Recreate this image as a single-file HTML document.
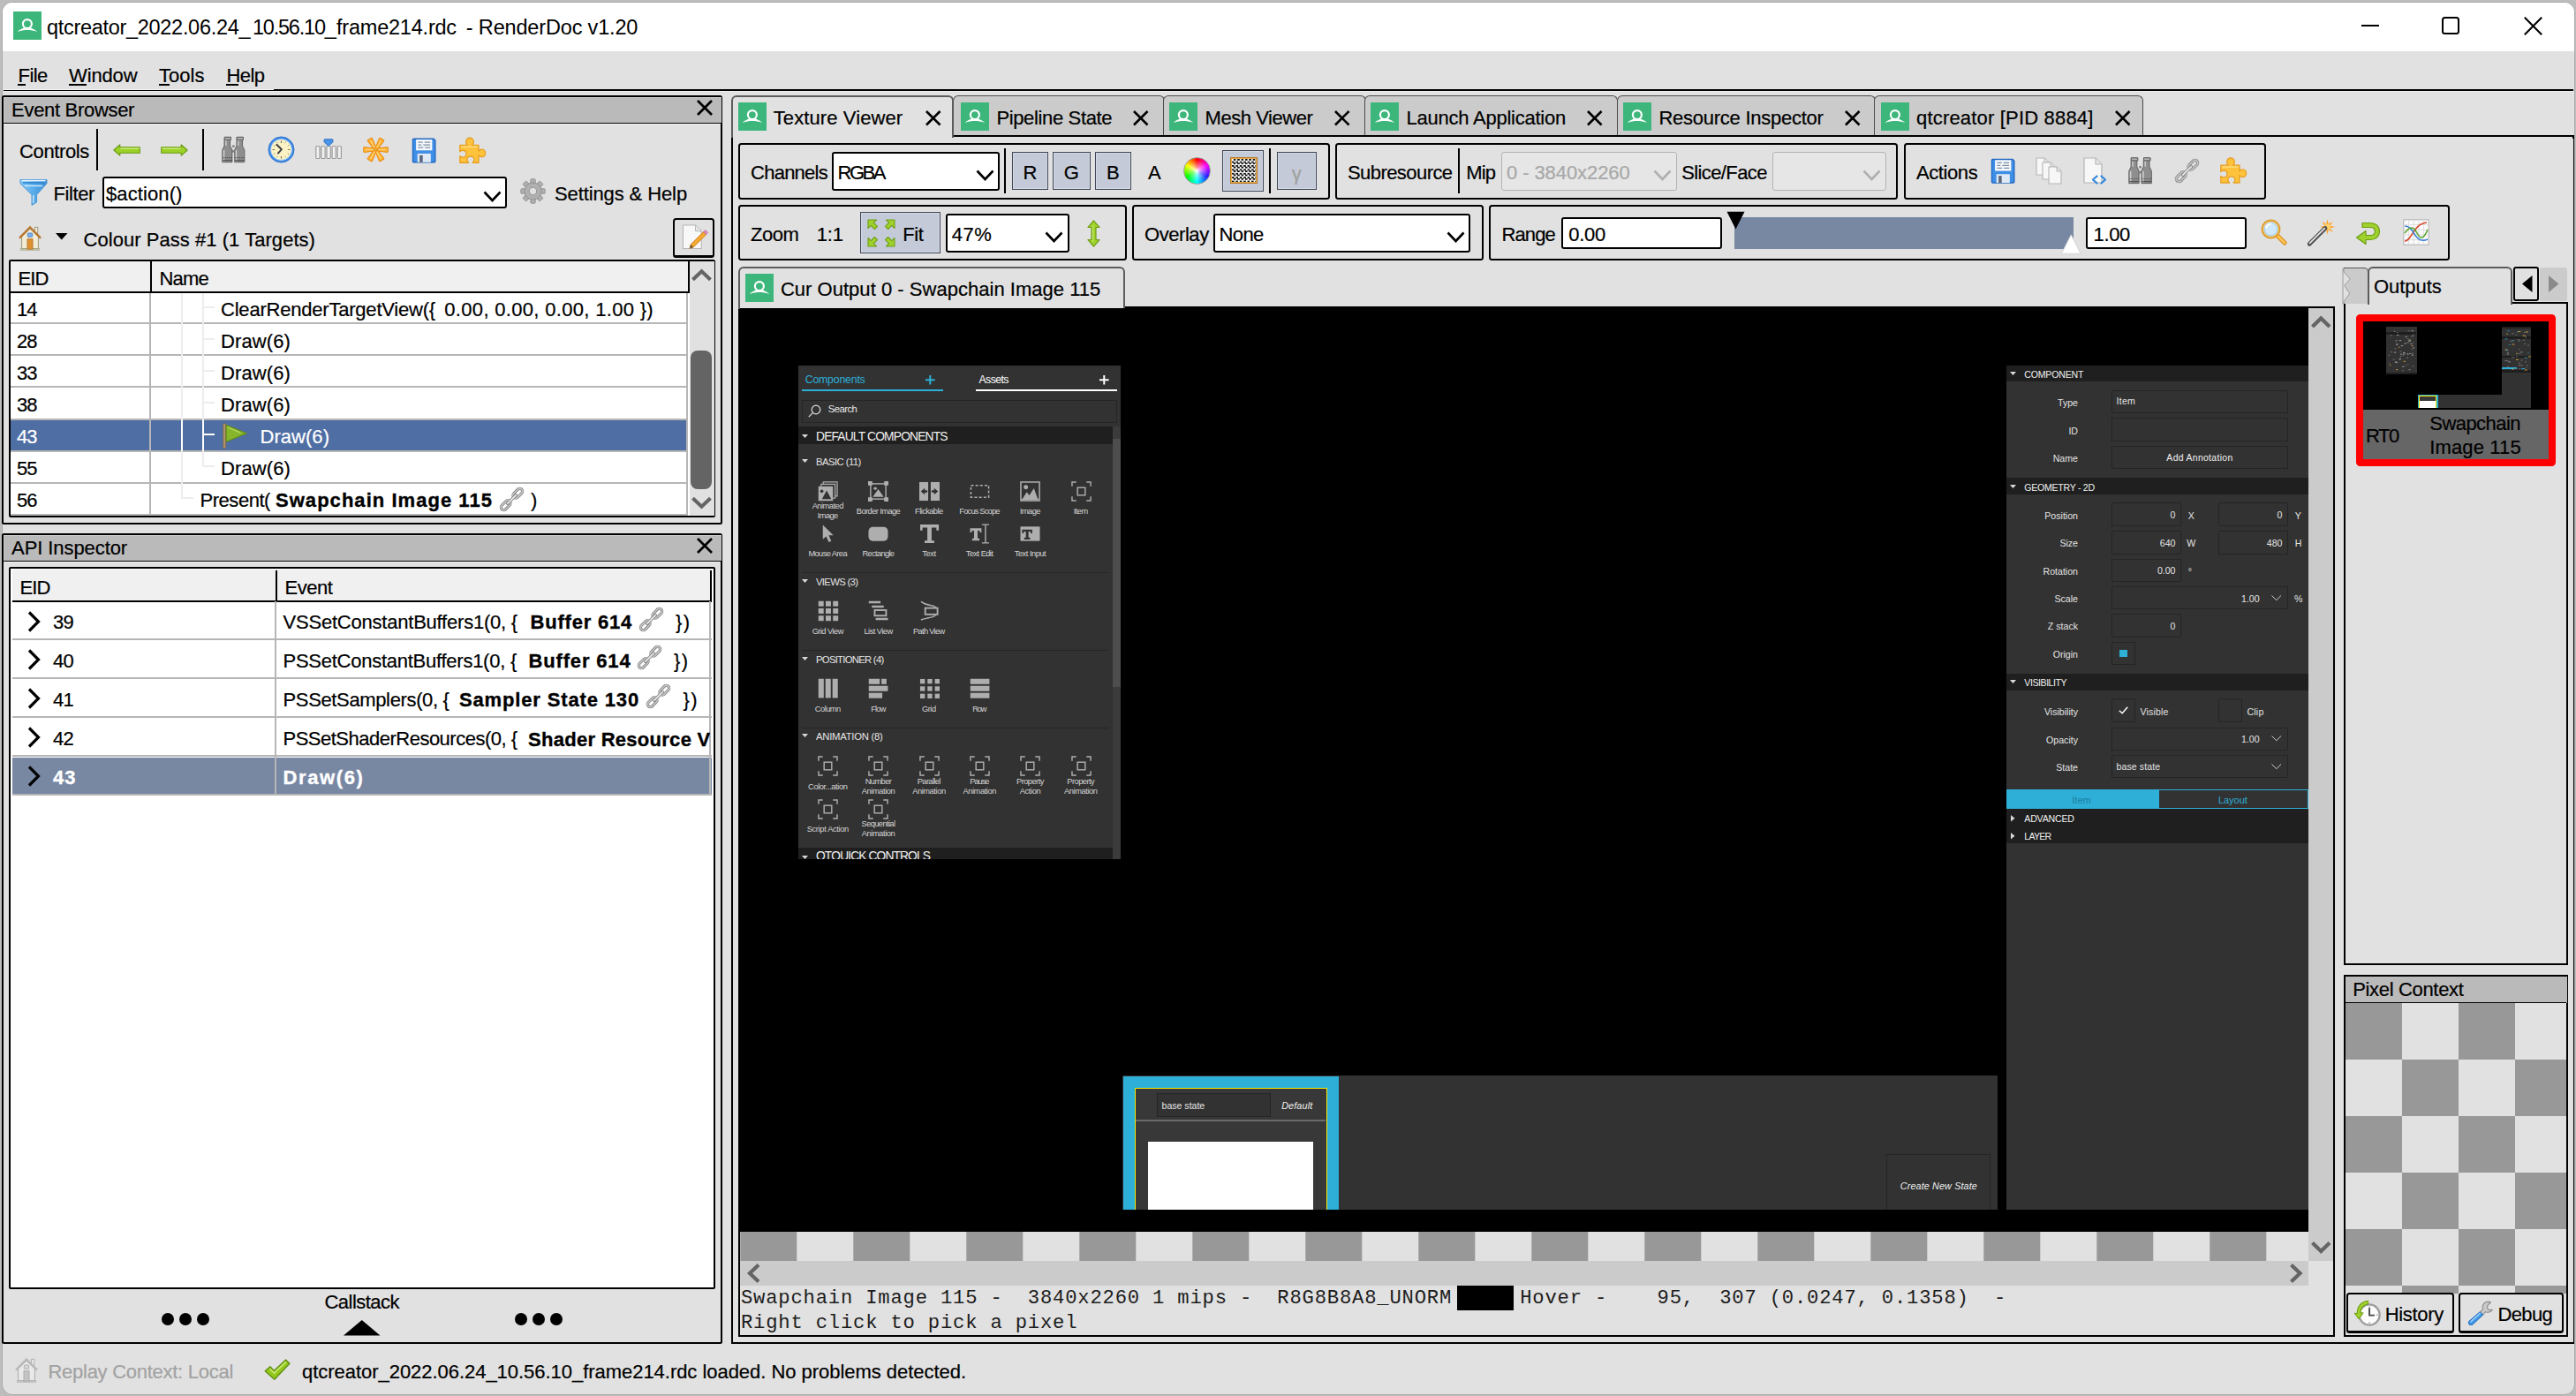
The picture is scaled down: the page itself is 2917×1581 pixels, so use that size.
<!DOCTYPE html>
<html lang="en"><head><meta charset="utf-8"><title>RenderDoc</title><style>
html,body{margin:0;padding:0;}
body{width:2917px;height:1581px;overflow:hidden;background:#bdbdbd;position:relative;font-family:"Liberation Sans",sans-serif;}
.a{position:absolute;box-sizing:border-box;}
.t{position:absolute;white-space:pre;line-height:1;font-family:"Liberation Sans",sans-serif;}
.bm{display:inline-block;width:0;height:0;vertical-align:baseline;}
svg{overflow:visible;}
</style></head><body>
<div class="a" style="left:1.5px;top:1.5px;width:2914px;height:1578px;background:#e1e1e1;border-radius:12px;overflow:hidden;border:1px solid #aaa;"></div>
<div class="a" style="left:2.5px;top:2.5px;width:2912px;height:55.5px;background:#fff;border-radius:11px 11px 0 0;"></div>
<svg class="a" style="left:15px;top:13px;" width="32" height="32" viewBox="0 0 32 32"><rect width="32" height="32" fill="#3db67b"/><circle cx="15.9" cy="14.1" r="5" fill="none" stroke="#fff" stroke-width="2.200"/><path d="M4.400 23C8.500 19.500 12.500 17.900 15.900 17.900S23.300 19.500 27.400 23C23 21.600 19.500 21.100 15.900 21.100S8.800 21.600 4.400 23z" fill="#fff"/></svg>
<div class="t" style="font-size:23.5px;color:#000;-webkit-text-stroke:.22px;letter-spacing:-0.300px;left:53.00px;top:20.10px;-webkit-text-stroke:0;">qtcreator_2022.06.24_</div>
<div class="t" style="font-size:23.5px;color:#000;-webkit-text-stroke:.22px;letter-spacing:-1.194px;left:285.90px;top:20.10px;-webkit-text-stroke:0;">10.56.10_</div>
<div class="t" style="font-size:23.5px;color:#000;-webkit-text-stroke:.22px;letter-spacing:-0.213px;left:381.00px;top:20.10px;-webkit-text-stroke:0;">frame214.rdc</div>
<div class="t" style="font-size:23.5px;color:#000;-webkit-text-stroke:.22px;letter-spacing:-0.162px;left:527.80px;top:20.10px;-webkit-text-stroke:0;">- RenderDoc v1.20</div>
<div class="a" style="left:2674px;top:27.8px;width:20.2px;height:2.2px;background:#000;"></div>
<div class="a" style="left:2765px;top:19.1px;width:19.9px;height:19.8px;border:2.200px solid #000;border-radius:3.5px;"></div>
<svg class="a" style="left:2857.7px;top:18.8px;" width="21" height="21" viewBox="0 0 21 21"><path d="M.8 .8l19.400 19.400M20.200 .8L.8 20.200" stroke="#000" stroke-width="2.100" fill="none"/></svg>
<div class="t" style="font-size:22px;color:#000;-webkit-text-stroke:.22px;letter-spacing:-0.638px;left:20.60px;top:75.10px;">File</div>
<div class="t" style="font-size:22px;color:#000;-webkit-text-stroke:.22px;letter-spacing:-0.125px;left:78.00px;top:75.10px;">Window</div>
<div class="t" style="font-size:22px;color:#000;-webkit-text-stroke:.22px;letter-spacing:0.028px;left:180.00px;top:75.10px;">Tools</div>
<div class="t" style="font-size:22px;color:#000;-webkit-text-stroke:.22px;letter-spacing:-0.562px;left:256.50px;top:75.10px;">Help</div>
<div class="a" style="left:20.1px;top:95.1px;width:9.4px;height:1.7px;background:#000;"></div>
<div class="a" style="left:77.5px;top:95.1px;width:20px;height:1.7px;background:#000;"></div>
<div class="a" style="left:179.5px;top:95.1px;width:12px;height:1.7px;background:#000;"></div>
<div class="a" style="left:256px;top:95.1px;width:14px;height:1.7px;background:#000;"></div>
<div class="a" style="left:4px;top:101.9px;width:306px;height:1.1px;background:#000;"></div>
<div class="a" style="left:310px;top:101px;width:2604px;height:2px;background:#000;"></div>
<div class="a" style="left:4px;top:101px;width:306px;height:0.9px;background:#f4f4f4;"></div>
<div class="a" style="left:4px;top:103px;width:2910px;height:1px;background:#efefef;"></div>
<svg class="a" style="left:17px;top:1536.5px;" width="26" height="28.5" viewBox="0 0 26 28.5"><rect x="18.600" y="2.300" width="3.200" height="7" fill="#e9e9e9" stroke="#ababab" stroke-width=".9"/><path d="M3.600 13V26.500H22.400V13L13 4.200z" fill="#e9e9e9" stroke="#ababab" stroke-width="1"/><path d="M1 14.600L13 2.300l12 12.300" fill="none" stroke="#b9b9b9" stroke-width="2.300" stroke-linejoin="miter"/><path d="M2.300 26.500h21.400v1.800H2.300z" fill="#c8c8c8" stroke="#ababab" stroke-width=".6"/><rect x="10" y="15.800" width="6" height="11.300" fill="#c4c4c4" stroke="#ababab" stroke-width="1"/><rect x="10.300" y="9" width="5.400" height="4.300" rx=".8" fill="#d6d6d6" stroke="#ababab" stroke-width=".9"/></svg>
<div class="t" style="font-size:22px;color:#a2a2a2;-webkit-text-stroke:.22px;letter-spacing:-0.273px;left:54.50px;top:1543.10px;">Replay Context: Local</div>
<svg class="a" style="left:299px;top:1539.4px;" width="30" height="24" viewBox="0 0 30 24"><path d="M1.200 13.800l5.800-5 4.300 4.600L24.600 1l4.300 4.200L11.800 23.200z" fill="#93c91e" stroke="#5f8d10" stroke-width="1.300" stroke-linejoin="round"/><path d="M6.800 11.300l4.600 4.800L24.800 3.400" stroke="#c9e873" stroke-width="1.500" fill="none"/></svg>
<div class="t" style="font-size:22px;color:#000;-webkit-text-stroke:.22px;letter-spacing:-0.037px;left:342.00px;top:1543.10px;">qtcreator_2022.06.24_10.56.10_frame214.rdc loaded. No problems detected.</div>
<div class="a" style="left:2px;top:108px;width:816px;height:486px;border:2px solid #000;border-radius:2.5px;"></div>
<div class="a" style="left:4px;top:110px;width:813px;height:29px;background:#bababa;box-shadow:inset 1px 1px 0 #cfcfcf;"></div>
<div class="a" style="left:4px;top:138.8px;width:813px;height:1.3px;background:#000;"></div>
<div class="a" style="left:4px;top:140.1px;width:812px;height:1px;background:#f2f2f2;"></div>
<div class="t" style="font-size:22px;color:#000;-webkit-text-stroke:.22px;letter-spacing:-0.312px;left:13.10px;top:114.10px;">Event Browser</div>
<svg class="a" style="left:789px;top:112.8px;" width="18" height="18" viewBox="0 0 18 18"><path d="M1 1l16 16M17 1L1 17" stroke="#000" stroke-width="2.7" fill="none"/></svg>
<div class="t" style="font-size:22px;color:#000;-webkit-text-stroke:.22px;letter-spacing:-0.365px;left:22.00px;top:161.10px;">Controls</div>
<div class="a" style="left:109.3px;top:146px;width:2px;height:47px;background:#000;"></div>
<div class="a" style="left:229.3px;top:146px;width:2px;height:47px;background:#000;"></div>
<svg class="a" style="left:128px;top:162.5px;" width="31" height="14" viewBox="0 0 31 14"><path d="M.800 7L7.800 .800V3.800H30.300V10.200H7.800V13.200Z" fill="#9bd028" stroke="#6a9a12" stroke-width="1.100" stroke-linejoin="round"/><path d="M8.300 5.300h21.300" stroke="#cdec7c" stroke-width="1.300"/></svg>
<svg class="a" style="left:182px;top:162.5px;" width="31" height="14" viewBox="0 0 31 14"><path d="M30.200 7L23.200 .800V3.800H.700V10.200H23.200V13.200Z" fill="#9bd028" stroke="#6a9a12" stroke-width="1.100" stroke-linejoin="round"/><path d="M1.400 5.300h21.300" stroke="#cdec7c" stroke-width="1.300"/></svg>
<svg class="a" style="left:250.5px;top:154px;" width="27" height="31" viewBox="0 0 27.5 30"><g transform="translate(0 0)"><path d="M3.300 .600h7.400v2.900h-.9v7.200l2.300 4.600V29.400H.800V15.300l2.300-4.600V3.500h.2z" fill="#8e8e8e" stroke="#5f5f5f" stroke-width="1" stroke-linejoin="round"/><path d="M3.300 .600h7.400v2.900H3.300z" fill="#b5b5b5" stroke="#5f5f5f" stroke-width="1"/><path d="M2.600 15.500V28.500" stroke="#d0d0d0" stroke-width="1.600"/><path d="M5 4.500v6" stroke="#cfcfcf" stroke-width="1.400"/><path d="M1.300 24.300H12.100" stroke="#4f4f4f" stroke-width="1.100" stroke-dasharray="1.300 1"/><path d="M1.300 27.300H12.100" stroke="#555" stroke-width="1.300"/></g><g transform="translate(14.2 0)"><path d="M3.300 .600h7.400v2.900h-.9v7.200l2.300 4.600V29.400H.800V15.300l2.300-4.600V3.500h.2z" fill="#8e8e8e" stroke="#5f5f5f" stroke-width="1" stroke-linejoin="round"/><path d="M3.300 .600h7.400v2.900H3.300z" fill="#b5b5b5" stroke="#5f5f5f" stroke-width="1"/><path d="M2.600 15.500V28.500" stroke="#d0d0d0" stroke-width="1.600"/><path d="M5 4.500v6" stroke="#cfcfcf" stroke-width="1.400"/><path d="M1.300 24.300H12.100" stroke="#4f4f4f" stroke-width="1.100" stroke-dasharray="1.300 1"/><path d="M1.300 27.300H12.100" stroke="#555" stroke-width="1.300"/></g><rect x="12.300" y="9.800" width="2.600" height="2.400" fill="#7d7d7d"/><rect x="12.300" y="15.600" width="2.600" height="2.600" fill="#7d7d7d"/></svg>
<svg class="a" style="left:303px;top:154px;" width="31" height="31" viewBox="0 0 31 31"><circle cx="15.5" cy="15.5" r="13.300" fill="#fbf3c4" stroke="#3f8ce6" stroke-width="2.700"/><circle cx="15.5" cy="15.5" r="14.500" fill="none" stroke="#2c6fc9" stroke-width=".8"/><circle cx="15.5" cy="15.5" r="11.800" fill="none" stroke="#a9cdf5" stroke-width=".9"/><g stroke="#77745c" stroke-width="1.200"><path d="M15.5 5.500v2.600M15.5 22.900v2.600M5.500 15.500h2.600M22.900 15.500h2.600"/></g><g stroke="#9a977c" stroke-width="1"><path d="M10.500 6.800l.8 1.400M20.500 6.800l-.8 1.400M6.800 10.500l1.400.8M24.200 10.500l-1.400.8M6.800 20.500l1.400-.8M24.200 20.500l-1.400-.8M10.500 24.200l.8-1.400M20.500 24.200l-.8-1.400"/></g><path d="M10.300 9.800l5.600 5.400-4 4.400" fill="none" stroke="#3c3c44" stroke-width="1.900" stroke-linecap="round" stroke-linejoin="round"/></svg>
<svg class="a" style="left:357px;top:157px;" width="30" height="24" viewBox="0 0 30 24"><rect x="0.8" y="8.500" width="4.200" height="14" rx="1" fill="#f1f1f1" stroke="#9c9c9c" stroke-width="1.200"/><rect x="6.8999999999999995" y="8.500" width="4.200" height="14" rx="1" fill="#f1f1f1" stroke="#9c9c9c" stroke-width="1.200"/><rect x="13.0" y="8.500" width="4.200" height="14" rx="1" fill="#f1f1f1" stroke="#9c9c9c" stroke-width="1.200"/><rect x="19.099999999999998" y="8.500" width="4.200" height="14" rx="1" fill="#f1f1f1" stroke="#9c9c9c" stroke-width="1.200"/><rect x="25.2" y="8.500" width="4.200" height="14" rx="1" fill="#f1f1f1" stroke="#9c9c9c" stroke-width="1.200"/><path d="M10.800 .700h8.400c.5 0 .8.300.8.800v2.300l-5 4.700-5-4.700V1.500c0-.5.300-.8.800-.8z" fill="#4a94e8" stroke="#2a6cc0" stroke-width=".9"/></svg>
<svg class="a" style="left:411px;top:155.3px;" width="29" height="29" viewBox="0 0 29 29"><path d="M15.500 13.100L27.600 11.500a.6.6 0 0 1 .7.500v5a.6.6 0 0 1-.7.500L15.500 15.900z" transform="rotate(0 14.5 14.5)" fill="#ffb12f" stroke="#e78d17" stroke-width="1" stroke-linejoin="round"/><path d="M15.500 13.100L27.600 11.500a.6.6 0 0 1 .7.500v5a.6.6 0 0 1-.7.500L15.500 15.900z" transform="rotate(60 14.5 14.5)" fill="#ffb12f" stroke="#e78d17" stroke-width="1" stroke-linejoin="round"/><path d="M15.500 13.100L27.600 11.500a.6.6 0 0 1 .7.500v5a.6.6 0 0 1-.7.500L15.500 15.900z" transform="rotate(120 14.5 14.5)" fill="#ffb12f" stroke="#e78d17" stroke-width="1" stroke-linejoin="round"/><path d="M15.500 13.100L27.600 11.500a.6.6 0 0 1 .7.500v5a.6.6 0 0 1-.7.500L15.500 15.900z" transform="rotate(180 14.5 14.5)" fill="#ffb12f" stroke="#e78d17" stroke-width="1" stroke-linejoin="round"/><path d="M15.500 13.100L27.600 11.500a.6.6 0 0 1 .7.500v5a.6.6 0 0 1-.7.500L15.500 15.900z" transform="rotate(240 14.5 14.5)" fill="#ffb12f" stroke="#e78d17" stroke-width="1" stroke-linejoin="round"/><path d="M15.500 13.100L27.600 11.500a.6.6 0 0 1 .7.500v5a.6.6 0 0 1-.7.500L15.500 15.900z" transform="rotate(300 14.5 14.5)" fill="#ffb12f" stroke="#e78d17" stroke-width="1" stroke-linejoin="round"/><path d="M17 14.500h9.500" transform="rotate(0 14.5 14.5)" stroke="#ffd27a" stroke-width="1.300"/><path d="M17 14.500h9.500" transform="rotate(60 14.5 14.5)" stroke="#ffd27a" stroke-width="1.300"/><path d="M17 14.500h9.500" transform="rotate(120 14.5 14.5)" stroke="#ffd27a" stroke-width="1.300"/><path d="M17 14.500h9.500" transform="rotate(180 14.5 14.5)" stroke="#ffd27a" stroke-width="1.300"/><path d="M17 14.500h9.500" transform="rotate(240 14.5 14.5)" stroke="#ffd27a" stroke-width="1.300"/><path d="M17 14.500h9.500" transform="rotate(300 14.5 14.5)" stroke="#ffd27a" stroke-width="1.300"/></svg>
<svg class="a" style="left:466px;top:155.5px;" width="28.5" height="29" viewBox="0 0 29 29"><path d="M2.5 1h23l1.8 1.8V27a1 1 0 0 1-1 1H2.5a1 1 0 0 1-1-1V2a1 1 0 0 1 1-1z" fill="#3f8fe6" stroke="#2268c4" stroke-width="1.4"/><rect x="5.2" y="1.8" width="18.6" height="12.5" fill="#f6f8fb"/><path d="M7.5 5h5.5M15 5h6.5M7.5 8h4M13.5 8h8M7.5 11h6M15.5 11h6" stroke="#7e8ea3" stroke-width="1.2"/><rect x="6.8" y="18" width="15.4" height="10" fill="#dfe9f5"/><rect x="9.3" y="20" width="3.6" height="8" fill="#5a6678"/></svg>
<svg class="a" style="left:518px;top:154.5px;" width="32" height="30.5" viewBox="0 0 32 30"><path d="M11.5 9.2c-1.2-1-1.9-2.2-1.9-3.7C9.6 2.9 11.6 1 14 1s4.4 1.9 4.4 4.5c0 1.5-.7 2.7-1.9 3.7H24v6.6c1-1.2 2.3-1.9 3.6-1.9 2.3 0 4 1.9 4 4.3s-1.700 4.300-4 4.300c-1.300 0-2.600-.7-3.600-1.900V29h-6.800c1.100-1 1.700-2.200 1.700-3.400 0-2.100-1.700-3.700-4-3.700s-4 1.600-4 3.700c0 1.200.6 2.400 1.700 3.400H2.800v-7.500c1 1 2.100 1.500 3.300 1.500 2.200 0 3.900-1.700 3.900-4s-1.700-4-3.900-4c-1.200 0-2.300.5-3.300 1.500V9.200z" fill="#ffc23d" stroke="#e89f20" stroke-width="1.3" stroke-linejoin="round"/><path d="M4.5 11h18" stroke="#ffe08a" stroke-width="1.3"/></svg>
<svg class="a" style="left:22px;top:201.5px;" width="32" height="31" viewBox="0 0 32 31"><defs><linearGradient id="fg" x1="0" y1="0" x2="1" y2="0"><stop offset="0" stop-color="#8ccbf6"/><stop offset=".45" stop-color="#5aaeea"/><stop offset="1" stop-color="#3c8fd6"/></linearGradient></defs><path d="M1 1.500h30v4.300L19.600 18.500V27l-5.600 3.400V18.500L1 5.800z" fill="url(#fg)" stroke="#4a97d8" stroke-width="1" stroke-linejoin="round"/><path d="M2.500 2.600h27" stroke="#e8f5ff" stroke-width="1.500"/><path d="M3.500 4.900h25" stroke="#2f86d0" stroke-width="1.600"/><path d="M6 8.500h20" stroke="#cfe9fb" stroke-width="1.400"/><path d="M15.700 19v9" stroke="#cfe9fb" stroke-width="1.400"/></svg>
<div class="t" style="font-size:22px;color:#000;-webkit-text-stroke:.22px;letter-spacing:-0.398px;left:60.50px;top:209.10px;">Filter</div>
<div class="a" style="left:116.3px;top:200px;width:457.5px;height:35.6px;background:#fff;border:2px solid #000;border-radius:3px;"></div>
<div class="t" style="font-size:22px;color:#000;-webkit-text-stroke:.22px;letter-spacing:0.101px;left:120.00px;top:209.10px;">$action()</div>
<svg class="a" style="left:547px;top:215.6px;" width="21" height="13" viewBox="0 0 21 13"><path d="M1.500 1.500l9 9.500 9-9.500" fill="none" stroke="#000" stroke-width="2.600" stroke-linecap="butt" stroke-linejoin="miter"/></svg>
<svg class="a" style="left:589px;top:202px;" width="29" height="29" viewBox="0 0 29 29"><rect x="11.8" y=".8" width="5.4" height="7" rx="1" transform="rotate(0 14.5 14.5)" fill="#b0b0b0" stroke="#8e8e8e" stroke-width=".9"/><rect x="11.8" y=".8" width="5.4" height="7" rx="1" transform="rotate(45 14.5 14.5)" fill="#b0b0b0" stroke="#8e8e8e" stroke-width=".9"/><rect x="11.8" y=".8" width="5.4" height="7" rx="1" transform="rotate(90 14.5 14.5)" fill="#b0b0b0" stroke="#8e8e8e" stroke-width=".9"/><rect x="11.8" y=".8" width="5.4" height="7" rx="1" transform="rotate(135 14.5 14.5)" fill="#b0b0b0" stroke="#8e8e8e" stroke-width=".9"/><rect x="11.8" y=".8" width="5.4" height="7" rx="1" transform="rotate(180 14.5 14.5)" fill="#b0b0b0" stroke="#8e8e8e" stroke-width=".9"/><rect x="11.8" y=".8" width="5.4" height="7" rx="1" transform="rotate(225 14.5 14.5)" fill="#b0b0b0" stroke="#8e8e8e" stroke-width=".9"/><rect x="11.8" y=".8" width="5.4" height="7" rx="1" transform="rotate(270 14.5 14.5)" fill="#b0b0b0" stroke="#8e8e8e" stroke-width=".9"/><rect x="11.8" y=".8" width="5.4" height="7" rx="1" transform="rotate(315 14.5 14.5)" fill="#b0b0b0" stroke="#8e8e8e" stroke-width=".9"/><circle cx="14.5" cy="14.5" r="9.6" fill="#b0b0b0" stroke="#8e8e8e" stroke-width=".9"/><circle cx="14.5" cy="14.5" r="8.700" fill="#b0b0b0"/><circle cx="14.5" cy="14.5" r="4.2" fill="#e1e1e1" stroke="#8e8e8e" stroke-width=".9"/></svg>
<div class="t" style="font-size:22px;color:#000;-webkit-text-stroke:.22px;letter-spacing:-0.109px;left:628.00px;top:209.10px;">Settings &amp; Help</div>
<svg class="a" style="left:21px;top:255px;" width="26" height="28.5" viewBox="0 0 26 28.5"><rect x="18.600" y="2.300" width="3.200" height="7" fill="#f1ecd6" stroke="#9b9478" stroke-width=".9"/><path d="M3.600 13V26.500H22.400V13L13 4.200z" fill="#f1ecd6" stroke="#9b9478" stroke-width="1"/><path d="M1 14.600L13 2.300l12 12.300" fill="none" stroke="#b9772e" stroke-width="2.300" stroke-linejoin="miter"/><path d="M2.300 26.500h21.400v1.800H2.300z" fill="#c9cfb0" stroke="#9b9478" stroke-width=".6"/><rect x="10" y="15.800" width="6" height="11.300" fill="#dd9230" stroke="#b9772e" stroke-width="1"/><rect x="10.300" y="9" width="5.400" height="4.300" rx=".8" fill="#7fb0ee" stroke="#4c7fc4" stroke-width=".9"/></svg>
<svg class="a" style="left:62.8px;top:263.7px;" width="13.5" height="7.5" viewBox="0 0 13.5 7.5"><path d="M0 0h13.500L6.750 7.500z" fill="#000"/></svg>
<div class="t" style="font-size:22px;color:#000;-webkit-text-stroke:.22px;letter-spacing:0.047px;left:94.50px;top:261.10px;">Colour Pass #1 (1 Targets)</div>
<div class="a" style="left:762px;top:246.8px;width:46.8px;height:45.6px;background:#e1e1e1;border:2px solid #000;border-radius:3.5px;border-bottom-width:3.600px;"></div>
<svg class="a" style="left:771.5px;top:253.5px;" width="30" height="29" viewBox="0 0 31 30"><path d="M1.500 1h14.500l7 7V28.500H1.500z" fill="#f8f8f8" stroke="#b5b5b5" stroke-width="1.100" stroke-linejoin="round"/><path d="M16 1v7h7" fill="#e6e6e6" stroke="#b5b5b5" stroke-width="1" stroke-linejoin="round"/><path d="M9.300 28.300l1.200-4.600L25.300 8.900l3.200 3.200L13.700 26.900z" fill="#f7a92f" stroke="#c07a18" stroke-width=".9" stroke-linejoin="round"/><path d="M25.300 8.900l1.400-1.400c.5-.5 1.300-.5 1.800 0l1.400 1.400c.5.5.5 1.300 0 1.800l-1.400 1.400z" fill="#e08fc0" stroke="#a85a8a" stroke-width=".7"/><path d="M9.300 28.300l1.200-4.600 3.200 3.200z" fill="#6b5a3a"/></svg>
<div class="a" style="left:10px;top:294px;width:800px;height:292px;background:#fff;border:2px solid #000;border-radius:2px;"></div>
<div class="a" style="left:12px;top:296px;width:768.5px;height:34px;background:#f0f0f0;"></div>
<div class="a" style="left:12px;top:329.5px;width:769px;height:2px;background:#000;"></div>
<div class="a" style="left:169.8px;top:296px;width:2.1px;height:35.5px;background:#000;"></div>
<div class="a" style="left:779px;top:296px;width:2px;height:35.5px;background:#000;"></div>
<div class="t" style="font-size:22px;color:#000;-webkit-text-stroke:.22px;letter-spacing:-0.896px;left:20.50px;top:305.10px;">EID</div>
<div class="t" style="font-size:22px;color:#000;-webkit-text-stroke:.22px;letter-spacing:-0.797px;left:180.50px;top:305.10px;">Name</div>
<div class="a" style="left:781px;top:296.2px;width:28px;height:288px;background:#e1e1e1;"></div>
<svg class="a" style="left:782.7px;top:304.5px;" width="23" height="13" viewBox="0 0 23 13"><path d="M1.500 11.800L11.500 2.200l10 9.600" fill="none" stroke="#646464" stroke-width="4"/></svg>
<div class="a" style="left:782.3px;top:396.5px;width:23.5px;height:157.5px;background:#646464;border-radius:8px;"></div>
<svg class="a" style="left:782.7px;top:563px;" width="23" height="13" viewBox="0 0 23 13"><path d="M1.500 1.200L11.500 10.800l10-9.600" fill="none" stroke="#646464" stroke-width="4"/></svg>
<div class="t" style="font-size:22px;color:#000;-webkit-text-stroke:.22px;letter-spacing:-0.992px;left:19.00px;top:340.10px;">14</div>
<div class="t" style="font-size:22px;color:#000;-webkit-text-stroke:.22px;letter-spacing:-0.211px;left:250.00px;top:340.10px;">ClearRenderTargetView({</div>
<div class="t" style="font-size:22px;color:#000;-webkit-text-stroke:.22px;letter-spacing:-0.992px;left:19.00px;top:376.10px;">28</div>
<div class="t" style="font-size:22px;color:#000;-webkit-text-stroke:.22px;letter-spacing:0.109px;left:250.00px;top:376.10px;">Draw(6)</div>
<div class="t" style="font-size:22px;color:#000;-webkit-text-stroke:.22px;letter-spacing:-0.992px;left:19.00px;top:412.10px;">33</div>
<div class="t" style="font-size:22px;color:#000;-webkit-text-stroke:.22px;letter-spacing:0.109px;left:250.00px;top:412.10px;">Draw(6)</div>
<div class="t" style="font-size:22px;color:#000;-webkit-text-stroke:.22px;letter-spacing:-0.992px;left:19.00px;top:448.10px;">38</div>
<div class="t" style="font-size:22px;color:#000;-webkit-text-stroke:.22px;letter-spacing:0.109px;left:250.00px;top:448.10px;">Draw(6)</div>
<div class="a" style="left:12.3px;top:475.4px;width:767.2px;height:35.7px;background:#4f6ea3;"></div>
<div class="t" style="font-size:22px;color:#fff;-webkit-text-stroke:.22px;letter-spacing:-0.992px;left:19.00px;top:484.10px;">43</div>
<div class="t" style="font-size:22px;color:#fff;-webkit-text-stroke:.22px;letter-spacing:0.038px;left:294.50px;top:484.10px;">Draw(6)</div>
<div class="t" style="font-size:22px;color:#000;-webkit-text-stroke:.22px;letter-spacing:-0.992px;left:19.00px;top:520.10px;">55</div>
<div class="t" style="font-size:22px;color:#000;-webkit-text-stroke:.22px;letter-spacing:0.109px;left:250.00px;top:520.10px;">Draw(6)</div>
<div class="t" style="font-size:22px;color:#000;-webkit-text-stroke:.22px;letter-spacing:-0.992px;left:19.00px;top:556.10px;">56</div>
<div class="t" style="font-size:22px;color:#000;-webkit-text-stroke:.22px;letter-spacing:0.319px;left:503.30px;top:340.10px;">0.00, 0.00, 0.00, 1.00 })</div>
<div class="a" style="left:12.3px;top:365.1px;width:766.7px;height:2px;background:#b6b6b6;"></div>
<div class="a" style="left:12.3px;top:401.1px;width:766.7px;height:2px;background:#b6b6b6;"></div>
<div class="a" style="left:12.3px;top:437.1px;width:766.7px;height:2px;background:#b6b6b6;"></div>
<div class="a" style="left:12.3px;top:473.5px;width:766.7px;height:2px;background:#b6b6b6;"></div>
<div class="a" style="left:12.3px;top:509.7px;width:766.7px;height:2px;background:#b6b6b6;"></div>
<div class="a" style="left:12.3px;top:545.7px;width:766.7px;height:2px;background:#b6b6b6;"></div>
<div class="a" style="left:12.3px;top:581.7px;width:766.7px;height:2px;background:#b6b6b6;"></div>
<div class="a" style="left:169.2px;top:332px;width:2px;height:252px;background:#b6b6b6;"></div>
<div class="a" style="left:777.2px;top:332px;width:2px;height:252px;background:#b6b6b6;"></div>
<div class="a" style="left:205px;top:332px;width:2px;height:232px;background:#ededed;"></div>
<div class="a" style="left:229px;top:332px;width:2px;height:196px;background:#ededed;"></div>
<div class="a" style="left:229px;top:347px;width:14px;height:2px;background:#ededed;"></div>
<div class="a" style="left:229px;top:383px;width:14px;height:2px;background:#ededed;"></div>
<div class="a" style="left:229px;top:419px;width:14px;height:2px;background:#ededed;"></div>
<div class="a" style="left:229px;top:455px;width:14px;height:2px;background:#ededed;"></div>
<div class="a" style="left:229px;top:527px;width:14px;height:2px;background:#ededed;"></div>
<div class="a" style="left:205px;top:563px;width:14px;height:2px;background:#ededed;"></div>
<div class="a" style="left:205px;top:476px;width:2px;height:34.3px;background:#fff;"></div>
<div class="a" style="left:229px;top:476px;width:2px;height:34.3px;background:#fff;"></div>
<div class="a" style="left:229px;top:490.8px;width:14px;height:2px;background:#fff;"></div>
<svg class="a" style="left:252px;top:478.5px;" width="28" height="30" viewBox="0 0 28 30"><rect x=".8" y=".8" width="2.800" height="28" rx=".8" fill="#b39670" stroke="#85673f" stroke-width=".8"/><path d="M4.200 2.300L27.300 11.800 4.200 21.300z" fill="#86b52b" stroke="#638f17" stroke-width="1.100" stroke-linejoin="round"/><path d="M5.500 5l15 6.200" stroke="#b3d765" stroke-width="1.300"/></svg>
<div class="t" style="font-size:22px;color:#000;-webkit-text-stroke:.22px;letter-spacing:-0.457px;left:226.50px;top:556.10px;">Present(</div>
<div class="t" style="font-size:22px;color:#000;font-weight:bold;-webkit-text-stroke:.35px;letter-spacing:1.040px;left:312.00px;top:556.10px;">Swapchain Image 115</div>
<svg class="a" style="left:565px;top:551px;" width="29" height="29" viewBox="0 0 29 29"><g transform="translate(21.300 7.700) rotate(45)"><rect x="-3.100" y="-6.300" width="6.200" height="12.600" rx="3.100" fill="none" stroke="#858585" stroke-width="3.200"/><rect x="-3.100" y="-6.300" width="6.200" height="12.600" rx="3.100" fill="none" stroke="#c6c6c6" stroke-width="1.500"/></g><g transform="translate(7.700 21.300) rotate(45)"><rect x="-3.100" y="-6.300" width="6.200" height="12.600" rx="3.100" fill="none" stroke="#858585" stroke-width="3.200"/><rect x="-3.100" y="-6.300" width="6.200" height="12.600" rx="3.100" fill="none" stroke="#c6c6c6" stroke-width="1.500"/></g><path d="M9.800 19.200l9.400-9.400" stroke="#858585" stroke-width="3.600" stroke-linecap="round"/><path d="M9.800 19.200l9.400-9.400" stroke="#ececec" stroke-width="1.700" stroke-linecap="round"/></svg>
<div class="t" style="font-size:22px;color:#000;-webkit-text-stroke:.22px;letter-spacing:-0.328px;left:601.00px;top:556.10px;">)</div>
<div class="a" style="left:2px;top:604.2px;width:816px;height:917.8px;border:2px solid #000;border-radius:2.5px;"></div>
<div class="a" style="left:4px;top:606.2px;width:813px;height:29px;background:#bababa;box-shadow:inset 1px 1px 0 #cfcfcf;"></div>
<div class="a" style="left:4px;top:635px;width:813px;height:1.3px;background:#000;"></div>
<div class="a" style="left:4px;top:636.3px;width:812px;height:1px;background:#f2f2f2;"></div>
<div class="t" style="font-size:22px;color:#000;-webkit-text-stroke:.22px;letter-spacing:-0.083px;left:13.10px;top:610.10px;">API Inspector</div>
<svg class="a" style="left:789px;top:609px;" width="18" height="18" viewBox="0 0 18 18"><path d="M1 1l16 16M17 1L1 17" stroke="#000" stroke-width="2.7" fill="none"/></svg>
<div class="a" style="left:10px;top:642.2px;width:800px;height:817.8px;background:#fff;border:2px solid #000;border-radius:2px;"></div>
<div class="a" style="left:13.5px;top:644.5px;width:792.5px;height:35.5px;background:#f0f0f0;"></div>
<div class="a" style="left:13.5px;top:680px;width:792.5px;height:2px;background:#000;"></div>
<div class="a" style="left:311.6px;top:645.5px;width:2.1px;height:36.5px;background:#000;"></div>
<div class="a" style="left:804px;top:645.5px;width:2px;height:36.5px;background:#000;"></div>
<div class="t" style="font-size:22px;color:#000;-webkit-text-stroke:.22px;letter-spacing:-0.896px;left:22.50px;top:655.10px;">EID</div>
<div class="t" style="font-size:22px;color:#000;-webkit-text-stroke:.22px;letter-spacing:-0.453px;left:322.50px;top:655.10px;">Event</div>
<div class="a" style="left:13.5px;top:857.5px;width:792px;height:42.5px;background:#7888a3;"></div>
<div class="a" style="left:13.5px;top:722.8px;width:792.5px;height:2px;background:#b6b6b6;"></div>
<div class="a" style="left:13.5px;top:766.7px;width:792.5px;height:2px;background:#b6b6b6;"></div>
<div class="a" style="left:13.5px;top:810.8px;width:792.5px;height:2px;background:#b6b6b6;"></div>
<div class="a" style="left:13.5px;top:855.1px;width:792.5px;height:2px;background:#b6b6b6;"></div>
<div class="a" style="left:13.5px;top:899.3px;width:792.5px;height:2px;background:#b6b6b6;"></div>
<div class="a" style="left:311.2px;top:681.4px;width:2px;height:218.6px;background:#b6b6b6;"></div>
<div class="a" style="left:803px;top:681.4px;width:2px;height:218.6px;background:#b6b6b6;"></div>
<svg class="a" style="left:30.5px;top:691.75px;" width="15" height="24" viewBox="0 0 15 24"><path d="M2 1.500L12.500 12 2 22.500" fill="none" stroke="#000" stroke-width="3.2" stroke-linejoin="miter"/></svg>
<div class="t" style="font-size:22px;color:#000;-webkit-text-stroke:.22px;letter-spacing:-0.742px;left:60.00px;top:694.10px;">39</div>
<div class="t" style="font-size:22px;color:#000;-webkit-text-stroke:.22px;letter-spacing:-0.215px;left:320.50px;top:694.10px;">VSSetConstantBuffers1(0, {</div>
<div class="t" style="font-size:22px;color:#000;font-weight:bold;-webkit-text-stroke:.35px;letter-spacing:0.791px;left:600.50px;top:694.10px;">Buffer 614</div>
<svg class="a" style="left:723px;top:686.55px;" width="29" height="29" viewBox="0 0 29 29"><g transform="translate(21.300 7.700) rotate(45)"><rect x="-3.100" y="-6.300" width="6.200" height="12.600" rx="3.100" fill="none" stroke="#858585" stroke-width="3.200"/><rect x="-3.100" y="-6.300" width="6.200" height="12.600" rx="3.100" fill="none" stroke="#c6c6c6" stroke-width="1.500"/></g><g transform="translate(7.700 21.300) rotate(45)"><rect x="-3.100" y="-6.300" width="6.200" height="12.600" rx="3.100" fill="none" stroke="#858585" stroke-width="3.200"/><rect x="-3.100" y="-6.300" width="6.200" height="12.600" rx="3.100" fill="none" stroke="#c6c6c6" stroke-width="1.500"/></g><path d="M9.800 19.200l9.400-9.400" stroke="#858585" stroke-width="3.600" stroke-linecap="round"/><path d="M9.800 19.200l9.400-9.400" stroke="#ececec" stroke-width="1.700" stroke-linecap="round"/></svg>
<div class="t" style="font-size:22px;color:#000;-webkit-text-stroke:.22px;letter-spacing:1.406px;left:765.00px;top:694.10px;">})</div>
<svg class="a" style="left:30.5px;top:734.85px;" width="15" height="24" viewBox="0 0 15 24"><path d="M2 1.500L12.500 12 2 22.500" fill="none" stroke="#000" stroke-width="3.2" stroke-linejoin="miter"/></svg>
<div class="t" style="font-size:22px;color:#000;-webkit-text-stroke:.22px;letter-spacing:-0.742px;left:60.00px;top:738.10px;">40</div>
<div class="t" style="font-size:22px;color:#000;-webkit-text-stroke:.22px;letter-spacing:-0.254px;left:320.50px;top:738.10px;">PSSetConstantBuffers1(0, {</div>
<div class="t" style="font-size:22px;color:#000;font-weight:bold;-webkit-text-stroke:.35px;letter-spacing:0.841px;left:598.50px;top:738.10px;">Buffer 614</div>
<svg class="a" style="left:721px;top:729.65px;" width="29" height="29" viewBox="0 0 29 29"><g transform="translate(21.300 7.700) rotate(45)"><rect x="-3.100" y="-6.300" width="6.200" height="12.600" rx="3.100" fill="none" stroke="#858585" stroke-width="3.200"/><rect x="-3.100" y="-6.300" width="6.200" height="12.600" rx="3.100" fill="none" stroke="#c6c6c6" stroke-width="1.500"/></g><g transform="translate(7.700 21.300) rotate(45)"><rect x="-3.100" y="-6.300" width="6.200" height="12.600" rx="3.100" fill="none" stroke="#858585" stroke-width="3.200"/><rect x="-3.100" y="-6.300" width="6.200" height="12.600" rx="3.100" fill="none" stroke="#c6c6c6" stroke-width="1.500"/></g><path d="M9.800 19.200l9.400-9.400" stroke="#858585" stroke-width="3.600" stroke-linecap="round"/><path d="M9.800 19.200l9.400-9.400" stroke="#ececec" stroke-width="1.700" stroke-linecap="round"/></svg>
<div class="t" style="font-size:22px;color:#000;-webkit-text-stroke:.22px;letter-spacing:1.406px;left:763.00px;top:738.10px;">})</div>
<svg class="a" style="left:30.5px;top:778.85px;" width="15" height="24" viewBox="0 0 15 24"><path d="M2 1.500L12.500 12 2 22.500" fill="none" stroke="#000" stroke-width="3.2" stroke-linejoin="miter"/></svg>
<div class="t" style="font-size:22px;color:#000;-webkit-text-stroke:.22px;letter-spacing:-0.742px;left:60.00px;top:782.10px;">41</div>
<div class="t" style="font-size:22px;color:#000;-webkit-text-stroke:.22px;letter-spacing:-0.358px;left:320.50px;top:782.10px;">PSSetSamplers(0, {</div>
<div class="t" style="font-size:22px;color:#000;font-weight:bold;-webkit-text-stroke:.35px;letter-spacing:0.850px;left:520.00px;top:782.10px;">Sampler State 130</div>
<svg class="a" style="left:731px;top:773.65px;" width="29" height="29" viewBox="0 0 29 29"><g transform="translate(21.300 7.700) rotate(45)"><rect x="-3.100" y="-6.300" width="6.200" height="12.600" rx="3.100" fill="none" stroke="#858585" stroke-width="3.200"/><rect x="-3.100" y="-6.300" width="6.200" height="12.600" rx="3.100" fill="none" stroke="#c6c6c6" stroke-width="1.500"/></g><g transform="translate(7.700 21.300) rotate(45)"><rect x="-3.100" y="-6.300" width="6.200" height="12.600" rx="3.100" fill="none" stroke="#858585" stroke-width="3.200"/><rect x="-3.100" y="-6.300" width="6.200" height="12.600" rx="3.100" fill="none" stroke="#c6c6c6" stroke-width="1.500"/></g><path d="M9.800 19.200l9.400-9.400" stroke="#858585" stroke-width="3.600" stroke-linecap="round"/><path d="M9.800 19.200l9.400-9.400" stroke="#ececec" stroke-width="1.700" stroke-linecap="round"/></svg>
<div class="t" style="font-size:22px;color:#000;-webkit-text-stroke:.22px;letter-spacing:1.406px;left:773.50px;top:782.10px;">})</div>
<svg class="a" style="left:30.5px;top:823.05px;" width="15" height="24" viewBox="0 0 15 24"><path d="M2 1.500L12.500 12 2 22.500" fill="none" stroke="#000" stroke-width="3.2" stroke-linejoin="miter"/></svg>
<div class="t" style="font-size:22px;color:#000;-webkit-text-stroke:.22px;letter-spacing:-0.742px;left:60.00px;top:826.10px;">42</div>
<div class="t" style="font-size:22px;color:#000;-webkit-text-stroke:.22px;letter-spacing:-0.504px;left:320.50px;top:826.10px;">PSSetShaderResources(0, {</div>
<div class="a" style="left:596px;top:812.7px;width:208.29999999999995px;height:42px;overflow:hidden;">
<div class="t" style="font-size:22px;color:#000;font-weight:bold;-webkit-text-stroke:.35px;letter-spacing:0.279px;left:2.00px;top:14.10px;">Shader Resource V</div>
</div>
<svg class="a" style="left:30.5px;top:867.3px;" width="15" height="24" viewBox="0 0 15 24"><path d="M2 1.500L12.500 12 2 22.500" fill="none" stroke="#000" stroke-width="3.2" stroke-linejoin="miter"/></svg>
<div class="t" style="font-size:22px;color:#fff;font-weight:bold;-webkit-text-stroke:.35px;letter-spacing:1.008px;left:60.00px;top:870.10px;">43</div>
<div class="t" style="font-size:22px;color:#fff;font-weight:bold;-webkit-text-stroke:.35px;letter-spacing:1.616px;left:320.50px;top:870.10px;">Draw(6)</div>
<div class="t" style="font-size:22px;color:#000;-webkit-text-stroke:.22px;letter-spacing:-0.528px;left:367.50px;top:1464.10px;">Callstack</div>
<div class="a" style="left:183px;top:1487px;width:13.6px;height:13.6px;background:#000;border-radius:7px;"></div>
<div class="a" style="left:203.2px;top:1487px;width:13.6px;height:13.6px;background:#000;border-radius:7px;"></div>
<div class="a" style="left:223.4px;top:1487px;width:13.6px;height:13.6px;background:#000;border-radius:7px;"></div>
<div class="a" style="left:583px;top:1487px;width:13.6px;height:13.6px;background:#000;border-radius:7px;"></div>
<div class="a" style="left:603.2px;top:1487px;width:13.6px;height:13.6px;background:#000;border-radius:7px;"></div>
<div class="a" style="left:623.4px;top:1487px;width:13.6px;height:13.6px;background:#000;border-radius:7px;"></div>
<svg class="a" style="left:389px;top:1495px;" width="41.5" height="17.6" viewBox="0 0 41.5 17.6"><path d="M0 17.600L20.750 0 41.500 17.600z" fill="#000"/></svg>
<div class="a" style="left:829px;top:153px;width:2086px;height:2px;background:#000;"></div>
<div class="a" style="left:828px;top:153px;width:2px;height:1369px;background:#000;"></div>
<div class="a" style="left:828px;top:1520px;width:2087px;height:2px;background:#000;"></div>
<div class="a" style="left:2913px;top:153px;width:2px;height:4px;background:#000;"></div>
<div class="a" style="left:2914px;top:153px;width:1px;height:1369px;background:#000;"></div>
<div class="a" style="left:1079px;top:108.3px;width:239.7px;height:44.7px;background:#cbcbcb;border:1.500px solid #4a4a4a;border-radius:6px 6px 0 0;border-bottom:none;"></div>
<svg class="a" style="left:1088px;top:116px;" width="32" height="32" viewBox="0 0 32 32"><rect width="32" height="32" fill="#3db67b"/><circle cx="15.9" cy="14.1" r="5" fill="none" stroke="#fff" stroke-width="2.200"/><path d="M4.400 23C8.500 19.500 12.500 17.900 15.900 17.900S23.300 19.500 27.400 23C23 21.600 19.500 21.100 15.900 21.100S8.800 21.600 4.400 23z" fill="#fff"/></svg>
<div class="t" style="font-size:22px;color:#000;-webkit-text-stroke:.22px;letter-spacing:-0.355px;left:1128.40px;top:123.10px;">Pipeline State</div>
<svg class="a" style="left:1283.3px;top:124.5px;" width="17.5" height="17.5" viewBox="0 0 18 18"><path d="M1 1l16 16M17 1L1 17" stroke="#000" stroke-width="2.7" fill="none"/></svg>
<div class="a" style="left:1317px;top:108.3px;width:229.8px;height:44.7px;background:#cbcbcb;border:1.500px solid #4a4a4a;border-radius:6px 6px 0 0;border-bottom:none;"></div>
<svg class="a" style="left:1324.1px;top:116px;" width="32" height="32" viewBox="0 0 32 32"><rect width="32" height="32" fill="#3db67b"/><circle cx="15.9" cy="14.1" r="5" fill="none" stroke="#fff" stroke-width="2.200"/><path d="M4.400 23C8.500 19.500 12.500 17.900 15.900 17.900S23.300 19.500 27.400 23C23 21.600 19.500 21.100 15.900 21.100S8.800 21.600 4.400 23z" fill="#fff"/></svg>
<div class="t" style="font-size:22px;color:#000;-webkit-text-stroke:.22px;letter-spacing:-0.451px;left:1364.50px;top:123.10px;">Mesh Viewer</div>
<svg class="a" style="left:1511px;top:124.5px;" width="17.5" height="17.5" viewBox="0 0 18 18"><path d="M1 1l16 16M17 1L1 17" stroke="#000" stroke-width="2.7" fill="none"/></svg>
<div class="a" style="left:1545px;top:108.3px;width:287.3px;height:44.7px;background:#cbcbcb;border:1.500px solid #4a4a4a;border-radius:6px 6px 0 0;border-bottom:none;"></div>
<svg class="a" style="left:1552.3px;top:116px;" width="32" height="32" viewBox="0 0 32 32"><rect width="32" height="32" fill="#3db67b"/><circle cx="15.9" cy="14.1" r="5" fill="none" stroke="#fff" stroke-width="2.200"/><path d="M4.400 23C8.500 19.500 12.500 17.900 15.900 17.900S23.300 19.500 27.400 23C23 21.600 19.500 21.100 15.900 21.100S8.800 21.600 4.400 23z" fill="#fff"/></svg>
<div class="t" style="font-size:22px;color:#000;-webkit-text-stroke:.22px;letter-spacing:-0.239px;left:1592.60px;top:123.10px;">Launch Application</div>
<svg class="a" style="left:1797px;top:124.5px;" width="17.5" height="17.5" viewBox="0 0 18 18"><path d="M1 1l16 16M17 1L1 17" stroke="#000" stroke-width="2.7" fill="none"/></svg>
<div class="a" style="left:1831px;top:108.3px;width:293.2px;height:44.7px;background:#cbcbcb;border:1.500px solid #4a4a4a;border-radius:6px 6px 0 0;border-bottom:none;"></div>
<svg class="a" style="left:1838px;top:116px;" width="32" height="32" viewBox="0 0 32 32"><rect width="32" height="32" fill="#3db67b"/><circle cx="15.9" cy="14.1" r="5" fill="none" stroke="#fff" stroke-width="2.200"/><path d="M4.400 23C8.500 19.500 12.500 17.900 15.900 17.900S23.300 19.500 27.400 23C23 21.600 19.500 21.100 15.900 21.100S8.800 21.600 4.400 23z" fill="#fff"/></svg>
<div class="t" style="font-size:22px;color:#000;-webkit-text-stroke:.22px;letter-spacing:-0.248px;left:1878.40px;top:123.10px;">Resource Inspector</div>
<svg class="a" style="left:2089px;top:124.5px;" width="17.5" height="17.5" viewBox="0 0 18 18"><path d="M1 1l16 16M17 1L1 17" stroke="#000" stroke-width="2.7" fill="none"/></svg>
<div class="a" style="left:2122px;top:108.3px;width:305.1px;height:44.7px;background:#cbcbcb;border:1.500px solid #4a4a4a;border-radius:6px 6px 0 0;border-bottom:none;"></div>
<svg class="a" style="left:2129.6px;top:116px;" width="32" height="32" viewBox="0 0 32 32"><rect width="32" height="32" fill="#3db67b"/><circle cx="15.9" cy="14.1" r="5" fill="none" stroke="#fff" stroke-width="2.200"/><path d="M4.400 23C8.500 19.500 12.500 17.900 15.900 17.900S23.300 19.500 27.400 23C23 21.600 19.500 21.100 15.900 21.100S8.800 21.600 4.400 23z" fill="#fff"/></svg>
<div class="t" style="font-size:22px;color:#000;-webkit-text-stroke:.22px;letter-spacing:0.185px;left:2170.00px;top:123.10px;">qtcreator [PID 8884]</div>
<svg class="a" style="left:2395.3px;top:124.5px;" width="17.5" height="17.5" viewBox="0 0 18 18"><path d="M1 1l16 16M17 1L1 17" stroke="#000" stroke-width="2.7" fill="none"/></svg>
<div class="a" style="left:828px;top:108px;width:252px;height:47.5px;background:#e1e1e1;border:2px solid #5c5c5c;border-radius:6px 6px 0 0;border-bottom:none;"></div>
<svg class="a" style="left:836px;top:116px;" width="32" height="32" viewBox="0 0 32 32"><rect width="32" height="32" fill="#3db67b"/><circle cx="15.9" cy="14.1" r="5" fill="none" stroke="#fff" stroke-width="2.200"/><path d="M4.400 23C8.500 19.500 12.500 17.900 15.900 17.900S23.300 19.500 27.400 23C23 21.600 19.500 21.100 15.900 21.100S8.800 21.600 4.400 23z" fill="#fff"/></svg>
<div class="t" style="font-size:22px;color:#000;-webkit-text-stroke:.22px;letter-spacing:0.106px;left:875.70px;top:123.10px;">Texture Viewer</div>
<svg class="a" style="left:1047.5px;top:124.5px;" width="17.5" height="17.5" viewBox="0 0 18 18"><path d="M1 1l16 16M17 1L1 17" stroke="#000" stroke-width="2.7" fill="none"/></svg>
<div class="a" style="left:836px;top:162.3px;width:670px;height:63.4px;border:2px solid #000;border-radius:3.5px;"></div>
<div class="t" style="font-size:22px;color:#000;-webkit-text-stroke:.22px;letter-spacing:-0.744px;left:850.00px;top:185.10px;">Channels</div>
<div class="a" style="left:942.3px;top:172px;width:189.7px;height:44px;background:#fff;border:2px solid #000;border-radius:3px;"></div>
<div class="t" style="font-size:22px;color:#000;-webkit-text-stroke:.22px;letter-spacing:-2.465px;left:948.50px;top:185.10px;">RGBA</div>
<svg class="a" style="left:1105px;top:191.5px;" width="21" height="13" viewBox="0 0 21 13"><path d="M1.500 1.500l9 9.500 9-9.500" fill="none" stroke="#000" stroke-width="2.600" stroke-linecap="butt" stroke-linejoin="miter"/></svg>
<div class="a" style="left:1137px;top:168px;width:2px;height:51px;background:#000;"></div>
<div class="a" style="left:1146px;top:172px;width:40.7px;height:42.7px;background:#c4cad8;border:1.300px solid #3f4757;box-shadow:inset 0 0 0 1px #d3d8e3;"></div>
<div class="t" style="font-size:22px;color:#000;-webkit-text-stroke:.22px;left:1158.40px;top:185.10px;">R</div>
<div class="a" style="left:1192px;top:172px;width:42.9px;height:42.7px;background:#c4cad8;border:1.300px solid #3f4757;box-shadow:inset 0 0 0 1px #d3d8e3;"></div>
<div class="t" style="font-size:22px;color:#000;-webkit-text-stroke:.22px;left:1204.69px;top:185.10px;">G</div>
<div class="a" style="left:1240px;top:172px;width:41px;height:42.7px;background:#c4cad8;border:1.300px solid #3f4757;box-shadow:inset 0 0 0 1px #d3d8e3;"></div>
<div class="t" style="font-size:22px;color:#000;-webkit-text-stroke:.22px;left:1252.96px;top:185.10px;">B</div>
<div class="t" style="font-size:22px;color:#000;-webkit-text-stroke:.22px;letter-spacing:-0.688px;left:1300.00px;top:185.10px;">A</div>
<div class="a" style="left:1340px;top:177.8px;width:31px;height:31px;border-radius:50%;background:radial-gradient(circle,#fff 0,rgba(255,255,255,.5) 22%,rgba(255,255,255,0) 60%),conic-gradient(from 0deg,#f00,#f0f,#22f,#0ff,#0f0,#ff0,#f00);border:1px solid #9a9a9a;"></div>
<div class="a" style="left:1384px;top:170px;width:46.7px;height:46.6px;background:#c4cad8;border:1.300px solid #3f4757;box-shadow:inset 0 0 0 1px #d3d8e3;"></div>
<div class="a" style="left:1393px;top:177.6px;width:30.6px;height:30px;background:repeating-conic-gradient(#111 0 25%,#fff 0 50%) 0 0/4.400px 4.400px;border:2.200px solid #e9a94b;outline:1px solid #b47a25;outline-offset:-1px;"></div>
<div class="a" style="left:1437px;top:168px;width:2px;height:51px;background:#000;"></div>
<div class="a" style="left:1446px;top:172px;width:45.1px;height:42.7px;background:#c4cad8;border:1.300px solid #3f4757;box-shadow:inset 0 0 0 1px #d3d8e3;"></div>
<div class="t" style="font-size:22px;color:#a0a0a0;-webkit-text-stroke:.22px;left:1462.80px;top:186.10px;">γ</div>
<div class="a" style="left:1512px;top:162.3px;width:637.2px;height:63.4px;border:2px solid #000;border-radius:3.5px;"></div>
<div class="t" style="font-size:22px;color:#000;-webkit-text-stroke:.22px;letter-spacing:-0.568px;left:1526.00px;top:185.10px;">Subresource</div>
<div class="a" style="left:1651px;top:168px;width:2px;height:51px;background:#000;"></div>
<div class="t" style="font-size:22px;color:#000;-webkit-text-stroke:.22px;letter-spacing:-0.818px;left:1660.30px;top:185.10px;">Mip</div>
<div class="a" style="left:1700px;top:172px;width:199.1px;height:44px;background:#e6e6e6;border:1.600px solid #b4b4b4;border-radius:3px;"></div>
<div class="t" style="font-size:22px;color:#a8a8a8;-webkit-text-stroke:.22px;letter-spacing:-0.082px;left:1706.00px;top:185.10px;">0 - 3840x2260</div>
<svg class="a" style="left:1872.4px;top:191.5px;" width="21" height="13" viewBox="0 0 21 13"><path d="M1.500 1.500l9 9.500 9-9.500" fill="none" stroke="#b0b0b0" stroke-width="2.600" stroke-linecap="butt" stroke-linejoin="miter"/></svg>
<div class="t" style="font-size:22px;color:#000;-webkit-text-stroke:.22px;letter-spacing:-0.602px;left:1904.20px;top:185.10px;">Slice/Face</div>
<div class="a" style="left:2007px;top:172px;width:128.9px;height:44px;background:#e6e6e6;border:1.600px solid #b4b4b4;border-radius:3px;"></div>
<svg class="a" style="left:2108.6px;top:191.5px;" width="21" height="13" viewBox="0 0 21 13"><path d="M1.500 1.500l9 9.500 9-9.500" fill="none" stroke="#b0b0b0" stroke-width="2.600" stroke-linecap="butt" stroke-linejoin="miter"/></svg>
<div class="a" style="left:2156px;top:162.3px;width:410.2px;height:63.4px;border:2px solid #000;border-radius:3.5px;"></div>
<div class="t" style="font-size:22px;color:#000;-webkit-text-stroke:.22px;letter-spacing:-0.408px;left:2170.00px;top:185.10px;">Actions</div>
<svg class="a" style="left:2254px;top:178.5px;" width="28.5" height="29.5" viewBox="0 0 29 29"><path d="M2.5 1h23l1.8 1.8V27a1 1 0 0 1-1 1H2.5a1 1 0 0 1-1-1V2a1 1 0 0 1 1-1z" fill="#3f8fe6" stroke="#2268c4" stroke-width="1.4"/><rect x="5.2" y="1.8" width="18.6" height="12.5" fill="#f6f8fb"/><path d="M7.5 5h5.5M15 5h6.5M7.5 8h4M13.5 8h8M7.5 11h6M15.5 11h6" stroke="#7e8ea3" stroke-width="1.2"/><rect x="6.8" y="18" width="15.4" height="10" fill="#dfe9f5"/><rect x="9.3" y="20" width="3.6" height="8" fill="#5a6678"/></svg>
<svg class="a" style="left:2305px;top:178px;" width="30" height="31" viewBox="0 0 30 31"><g transform="translate(1 1)"><path d="M0 0h9l5 5v14H0z" fill="#f7f7f7" stroke="#b5b5b5" stroke-width="1.100" stroke-linejoin="round"/><path d="M9 0v5h5" fill="#e4e4e4" stroke="#b5b5b5" stroke-width="1"/></g><g transform="translate(8 6)"><path d="M0 0h9l5 5v14H0z" fill="#f7f7f7" stroke="#b5b5b5" stroke-width="1.100" stroke-linejoin="round"/><path d="M9 0v5h5" fill="#e4e4e4" stroke="#b5b5b5" stroke-width="1"/></g><g transform="translate(15 11)"><path d="M0 0h9l5 5v14H0z" fill="#f7f7f7" stroke="#b5b5b5" stroke-width="1.100" stroke-linejoin="round"/><path d="M9 0v5h5" fill="#e4e4e4" stroke="#b5b5b5" stroke-width="1"/></g></svg>
<svg class="a" style="left:2357.5px;top:178px;" width="28" height="31" viewBox="0 0 28 31"><path d="M2 1h13l7 7v21H2z" fill="#f7f7f7" stroke="#b5b5b5" stroke-width="1.200" stroke-linejoin="round"/><path d="M15 1v7h7" fill="#e4e4e4" stroke="#b5b5b5" stroke-width="1.100"/><path d="M16.500 21.500l-4.500 4 4.500 4M21.500 21.500l4.500 4-4.500 4" fill="none" stroke="#3388dd" stroke-width="2.300" stroke-linecap="round" stroke-linejoin="round"/></svg>
<svg class="a" style="left:2410px;top:178px;" width="27.5" height="30.5" viewBox="0 0 27.5 30"><g transform="translate(0 0)"><path d="M3.300 .600h7.400v2.900h-.9v7.200l2.300 4.600V29.400H.800V15.300l2.300-4.600V3.500h.2z" fill="#8e8e8e" stroke="#5f5f5f" stroke-width="1" stroke-linejoin="round"/><path d="M3.300 .600h7.400v2.900H3.300z" fill="#b5b5b5" stroke="#5f5f5f" stroke-width="1"/><path d="M2.600 15.500V28.500" stroke="#d0d0d0" stroke-width="1.600"/><path d="M5 4.500v6" stroke="#cfcfcf" stroke-width="1.400"/><path d="M1.300 24.300H12.100" stroke="#4f4f4f" stroke-width="1.100" stroke-dasharray="1.300 1"/><path d="M1.300 27.300H12.100" stroke="#555" stroke-width="1.300"/></g><g transform="translate(14.2 0)"><path d="M3.300 .600h7.400v2.900h-.9v7.200l2.300 4.600V29.400H.800V15.300l2.300-4.600V3.500h.2z" fill="#8e8e8e" stroke="#5f5f5f" stroke-width="1" stroke-linejoin="round"/><path d="M3.300 .600h7.400v2.900H3.300z" fill="#b5b5b5" stroke="#5f5f5f" stroke-width="1"/><path d="M2.600 15.500V28.500" stroke="#d0d0d0" stroke-width="1.600"/><path d="M5 4.500v6" stroke="#cfcfcf" stroke-width="1.400"/><path d="M1.300 24.300H12.100" stroke="#4f4f4f" stroke-width="1.100" stroke-dasharray="1.300 1"/><path d="M1.300 27.300H12.100" stroke="#555" stroke-width="1.300"/></g><rect x="12.300" y="9.800" width="2.600" height="2.400" fill="#7d7d7d"/><rect x="12.300" y="15.600" width="2.600" height="2.600" fill="#7d7d7d"/></svg>
<svg class="a" style="left:2461.5px;top:179px;" width="29" height="29" viewBox="0 0 29 29"><g transform="translate(21.300 7.700) rotate(45)"><rect x="-3.100" y="-6.300" width="6.200" height="12.600" rx="3.100" fill="none" stroke="#858585" stroke-width="3.200"/><rect x="-3.100" y="-6.300" width="6.200" height="12.600" rx="3.100" fill="none" stroke="#c6c6c6" stroke-width="1.500"/></g><g transform="translate(7.700 21.300) rotate(45)"><rect x="-3.100" y="-6.300" width="6.200" height="12.600" rx="3.100" fill="none" stroke="#858585" stroke-width="3.200"/><rect x="-3.100" y="-6.300" width="6.200" height="12.600" rx="3.100" fill="none" stroke="#c6c6c6" stroke-width="1.500"/></g><path d="M9.800 19.200l9.400-9.400" stroke="#858585" stroke-width="3.600" stroke-linecap="round"/><path d="M9.800 19.200l9.400-9.400" stroke="#ececec" stroke-width="1.700" stroke-linecap="round"/></svg>
<svg class="a" style="left:2512px;top:178px;" width="32" height="30" viewBox="0 0 32 30"><path d="M11.5 9.2c-1.2-1-1.9-2.2-1.9-3.7C9.6 2.9 11.6 1 14 1s4.4 1.9 4.4 4.5c0 1.5-.7 2.7-1.9 3.7H24v6.6c1-1.2 2.3-1.9 3.6-1.9 2.3 0 4 1.9 4 4.3s-1.700 4.300-4 4.300c-1.300 0-2.600-.7-3.600-1.900V29h-6.800c1.100-1 1.700-2.200 1.700-3.400 0-2.100-1.700-3.700-4-3.700s-4 1.600-4 3.700c0 1.200.6 2.400 1.700 3.400H2.800v-7.500c1 1 2.100 1.500 3.300 1.500 2.200 0 3.900-1.700 3.900-4s-1.700-4-3.900-4c-1.200 0-2.300.5-3.300 1.500V9.200z" fill="#ffc23d" stroke="#e89f20" stroke-width="1.3" stroke-linejoin="round"/><path d="M4.5 11h18" stroke="#ffe08a" stroke-width="1.3"/></svg>
<div class="a" style="left:836px;top:232.1px;width:439.9px;height:63.4px;border:2px solid #000;border-radius:3.5px;"></div>
<div class="t" style="font-size:22px;color:#000;-webkit-text-stroke:.22px;letter-spacing:-0.463px;left:850.00px;top:255.10px;">Zoom</div>
<div class="t" style="font-size:22px;color:#000;-webkit-text-stroke:.22px;letter-spacing:-0.198px;left:924.70px;top:255.10px;">1:1</div>
<div class="a" style="left:974px;top:240px;width:90.5px;height:46.6px;background:#c4cad8;border:1.300px solid #3f4757;box-shadow:inset 0 0 0 1px #d3d8e3;"></div>
<svg class="a" style="left:982px;top:247.8px;" width="32" height="32" viewBox="0 0 32 32"><path d="M1 1h9.500L7.300 4.200l4.200 4.200-3.100 3.100-4.200-4.200L1 10.500z" fill="#9fd12c" stroke="#6f9e14" stroke-width="1.100" stroke-linejoin="round"/><g transform="translate(32 0) scale(-1 1)"><path d="M1 1h9.500L7.300 4.200l4.200 4.200-3.100 3.100-4.200-4.200L1 10.500z" fill="#9fd12c" stroke="#6f9e14" stroke-width="1.100" stroke-linejoin="round"/></g><g transform="translate(0 32) scale(1 -1)"><path d="M1 1h9.500L7.300 4.200l4.200 4.200-3.100 3.100-4.200-4.200L1 10.500z" fill="#9fd12c" stroke="#6f9e14" stroke-width="1.100" stroke-linejoin="round"/></g><g transform="translate(32 32) scale(-1 -1)"><path d="M1 1h9.500L7.300 4.200l4.200 4.200-3.100 3.100-4.200-4.200L1 10.500z" fill="#9fd12c" stroke="#6f9e14" stroke-width="1.100" stroke-linejoin="round"/></g></svg>
<div class="t" style="font-size:22px;color:#000;-webkit-text-stroke:.22px;letter-spacing:-0.418px;left:1022.30px;top:255.10px;">Fit</div>
<div class="a" style="left:1071px;top:242px;width:139.6px;height:44px;background:#fff;border:2px solid #000;border-radius:3px;"></div>
<div class="t" style="font-size:22px;color:#000;-webkit-text-stroke:.22px;letter-spacing:0.484px;left:1077.80px;top:255.10px;">47%</div>
<svg class="a" style="left:1183.2px;top:261.5px;" width="21" height="13" viewBox="0 0 21 13"><path d="M1.500 1.500l9 9.500 9-9.500" fill="none" stroke="#000" stroke-width="2.600" stroke-linecap="butt" stroke-linejoin="miter"/></svg>
<svg class="a" style="left:1231.3px;top:248.8px;" width="15" height="31" viewBox="0 0 15 31"><path d="M7.500 .8L14 8.500H10V22.500h4L7.500 30.200 1 22.500h4V8.500H1z" fill="#9fd12c" stroke="#6f9e14" stroke-width="1.200" stroke-linejoin="round"/><path d="M6.600 6v19" stroke="#c6e86e" stroke-width="1.200"/></svg>
<div class="a" style="left:1282px;top:232.1px;width:397.5px;height:63.4px;border:2px solid #000;border-radius:3.5px;"></div>
<div class="t" style="font-size:22px;color:#000;-webkit-text-stroke:.22px;letter-spacing:-0.442px;left:1296.00px;top:255.10px;">Overlay</div>
<div class="a" style="left:1374px;top:242px;width:291.1px;height:44px;background:#fff;border:2px solid #000;border-radius:3px;"></div>
<div class="t" style="font-size:22px;color:#000;-webkit-text-stroke:.22px;letter-spacing:-0.648px;left:1380.60px;top:255.10px;">None</div>
<svg class="a" style="left:1638.3px;top:261.5px;" width="21" height="13" viewBox="0 0 21 13"><path d="M1.500 1.500l9 9.500 9-9.500" fill="none" stroke="#000" stroke-width="2.600" stroke-linecap="butt" stroke-linejoin="miter"/></svg>
<div class="a" style="left:1686px;top:232.1px;width:1087.5px;height:63.4px;border:2px solid #000;border-radius:3.5px;"></div>
<div class="t" style="font-size:22px;color:#000;-webkit-text-stroke:.22px;letter-spacing:-0.929px;left:1700.60px;top:255.10px;">Range</div>
<div class="a" style="left:1768px;top:245.8px;width:181.5px;height:36.2px;background:#fff;border:2px solid #000;border-radius:3px;"></div>
<div class="t" style="font-size:22px;color:#000;-webkit-text-stroke:.22px;letter-spacing:-0.332px;left:1776.30px;top:255.10px;">0.00</div>
<div class="a" style="left:1964px;top:246px;width:383.5px;height:35.5px;background:#7888a3;"></div>
<svg class="a" style="left:1955px;top:238.5px;" width="21" height="21" viewBox="0 0 21 21"><path d="M.5 .8h20L10.500 20.500z" fill="#000"/></svg>
<svg class="a" style="left:2334px;top:265.3px;" width="22.5" height="22.5" viewBox="0 0 22.5 22.5"><path d="M.4 22.200L11.250 .800 22.100 22.200z" fill="#fff" stroke="#d0d0d0" stroke-width=".8"/></svg>
<div class="a" style="left:2362px;top:245.8px;width:181.5px;height:36.2px;background:#fff;border:2px solid #000;border-radius:3px;"></div>
<div class="t" style="font-size:22px;color:#000;-webkit-text-stroke:.22px;letter-spacing:-0.332px;left:2370.50px;top:255.10px;">1.00</div>
<svg class="a" style="left:2560px;top:248px;" width="29" height="29" viewBox="0 0 29 29"><path d="M18.500 18.500l8.500 8.500" stroke="#d98a1e" stroke-width="5.200" stroke-linecap="round"/><path d="M18.500 18.500l8.500 8.500" stroke="#ffc552" stroke-width="3" stroke-linecap="round"/><circle cx="11.500" cy="11.500" r="9.700" fill="#cfe8fb" stroke="#dfa136" stroke-width="2.400"/><circle cx="11.500" cy="11.500" r="8.300" fill="none" stroke="#f6d58c" stroke-width="1"/><circle cx="11.500" cy="11.500" r="7.300" fill="none" stroke="#9cc9ee" stroke-width="1"/><path d="M6 9.500a6 6 0 0 1 5-4" stroke="#fff" stroke-width="2" fill="none" stroke-linecap="round"/></svg>
<svg class="a" style="left:2612.8px;top:247.5px;" width="31" height="30" viewBox="0 0 31 30"><path d="M22.500 .300l1.500 6.500h-3z" transform="rotate(0 22.5 9)" fill="#ff9f1f"/><path d="M22.500 .300l1.500 6.500h-3z" transform="rotate(45 22.5 9)" fill="#ff9f1f"/><path d="M22.500 .300l1.500 6.500h-3z" transform="rotate(90 22.5 9)" fill="#ff9f1f"/><path d="M22.500 .300l1.500 6.500h-3z" transform="rotate(135 22.5 9)" fill="#ff9f1f"/><path d="M22.500 .300l1.500 6.500h-3z" transform="rotate(180 22.5 9)" fill="#ff9f1f"/><path d="M22.500 .300l1.500 6.500h-3z" transform="rotate(225 22.5 9)" fill="#ff9f1f"/><path d="M22.500 .300l1.500 6.500h-3z" transform="rotate(270 22.5 9)" fill="#ff9f1f"/><path d="M22.500 .300l1.500 6.500h-3z" transform="rotate(315 22.5 9)" fill="#ff9f1f"/><circle cx="22.500" cy="9" r="3.600" fill="#ffd06a"/><path d="M2.200 28.300L20 10.500" stroke="#4f4f4f" stroke-width="4.800" stroke-linecap="round"/><path d="M2.500 27.400L19.300 10.600" stroke="#e8e8e8" stroke-width="1.600" stroke-linecap="round"/></svg>
<svg class="a" style="left:2667px;top:248px;" width="29" height="30" viewBox="0 0 29 30"><path d="M8 4.500h9.500c6 0 10 4 10 9.500s-4 9.500-10 9.500H12v5L1.500 21 12 13.500v5h5.500c3 0 4.800-2 4.800-4.500s-1.800-4.500-4.800-4.500H8z" fill="#9fd12c" stroke="#6f9e14" stroke-width="1.200" stroke-linejoin="round"/></svg>
<svg class="a" style="left:2720.8px;top:248px;" width="30" height="30" viewBox="0 0 30 30"><rect x=".8" y=".8" width="28.400" height="28.400" fill="#fafafa" stroke="#b9b9b9" stroke-width="1.200"/><path d="M6.5 1.500v27M1.500 6.5h27" stroke="#dcdcdc" stroke-width=".9"/><path d="M12.2 1.500v27M1.500 12.2h27" stroke="#dcdcdc" stroke-width=".9"/><path d="M17.9 1.500v27M1.500 17.9h27" stroke="#dcdcdc" stroke-width=".9"/><path d="M23.6 1.500v27M1.500 23.6h27" stroke="#dcdcdc" stroke-width=".9"/><path d="M2 25C10 25 12 5 27 4" fill="none" stroke="#d8452f" stroke-width="1.600"/><path d="M2 8c8 0 10 9 14 13s8 4 12 2" fill="none" stroke="#3b7fd9" stroke-width="1.600"/><path d="M2 16c6-8 10-8 14 0s8 6 12-4" fill="none" stroke="#5aa52a" stroke-width="1.600"/></svg>
<div class="a" style="left:1272px;top:347.3px;width:1372px;height:2px;background:#000;"></div>
<div class="a" style="left:836px;top:348px;width:2px;height:1166px;background:#000;"></div>
<div class="a" style="left:2642px;top:347.3px;width:2px;height:1166.7px;background:#000;"></div>
<div class="a" style="left:836px;top:1512px;width:1808px;height:2px;background:#000;"></div>
<div class="a" style="left:836px;top:302.3px;width:438px;height:48px;background:#e1e1e1;border:2px solid #5c5c5c;border-radius:6px 6px 0 0;border-bottom:none;"></div>
<svg class="a" style="left:843.8px;top:310px;" width="32" height="32" viewBox="0 0 32 32"><rect width="32" height="32" fill="#3db67b"/><circle cx="15.9" cy="14.1" r="5" fill="none" stroke="#fff" stroke-width="2.200"/><path d="M4.400 23C8.500 19.500 12.500 17.900 15.900 17.900S23.300 19.500 27.400 23C23 21.600 19.500 21.100 15.900 21.100S8.800 21.600 4.400 23z" fill="#fff"/></svg>
<div class="t" style="font-size:22px;color:#000;-webkit-text-stroke:.22px;letter-spacing:0.027px;left:883.90px;top:317.10px;">Cur Output 0 - Swapchain Image 115</div>
<div class="a" style="left:837.5px;top:349.1px;width:1776.1px;height:1045.6px;background:#000;"></div>
<div class="a" style="left:837.5px;top:1395px;width:1776.1px;height:33px;background:repeating-conic-gradient(#e1e1e1 0 25%,#989898 0 50%) 0.3px 0px/128px 128px;"></div>
<div class="a" style="left:2614px;top:349.1px;width:28.4px;height:1078.6px;background:#cbcbcb;"></div>
<svg class="a" style="left:2617px;top:357.8px;" width="22.5" height="13.5" viewBox="0 0 22.5 13.5"><path d="M1.500 12L11.250 2.500 21 12" fill="none" stroke="#646464" stroke-width="4.200"/></svg>
<svg class="a" style="left:2617px;top:1406.3px;" width="22.5" height="13.5" viewBox="0 0 22.5 13.5"><path d="M1.500 1.500L11.250 11 21 1.500" fill="none" stroke="#646464" stroke-width="4.200"/></svg>
<div class="a" style="left:837.5px;top:1428px;width:1776.1px;height:27.6px;background:#cbcbcb;"></div>
<svg class="a" style="left:845.5px;top:1431px;" width="14.5" height="22" viewBox="0 0 14.5 22"><path d="M13 1.500L3 11l10 9.500" fill="none" stroke="#646464" stroke-width="4.200"/></svg>
<svg class="a" style="left:2592.5px;top:1431px;" width="14.5" height="22" viewBox="0 0 14.5 22"><path d="M1.500 1.500L11.500 11l-10 9.500" fill="none" stroke="#646464" stroke-width="4.200"/></svg>
<div class="t" style="font-size:22.2px;color:#1c1c1c;font-family:'Liberation Mono', monospace;letter-spacing:0.810px;left:839.00px;top:1460.10px;">Swapchain Image 115 -  3840x2260 1 mips -  R8G8B8A8_UNORM</div>
<div class="a" style="left:1650px;top:1456px;width:64px;height:27.6px;background:#000;"></div>
<div class="t" style="font-size:22.2px;color:#1c1c1c;font-family:'Liberation Mono', monospace;letter-spacing:0.810px;left:1721.20px;top:1460.10px;">Hover -    95,  307 (0.0247, 0.1358)  -</div>
<div class="t" style="font-size:22.2px;color:#1c1c1c;font-family:'Liberation Mono', monospace;letter-spacing:0.810px;left:839.00px;top:1488.10px;">Right click to pick a pixel</div>
<div class="a" style="left:903.9px;top:414px;width:365.1px;height:559px;background:#323232;overflow:hidden;"></div>
<div class="t" style="font-size:12.3px;color:#2dafd7;letter-spacing:-0.183px;left:911.70px;top:424.30px;">Components</div>
<svg class="a" style="left:1047.8px;top:424.7px;" width="10.6" height="10.6" viewBox="0 0 10.6 10.6"><path d="M5.300 0v10.600M0 5.300h10.600" stroke="#2dafd7" stroke-width="2"/></svg>
<div class="a" style="left:908px;top:441px;width:159.8px;height:2.2px;background:#2dafd7;"></div>
<div class="t" style="font-size:12.3px;color:#fff;letter-spacing:-0.601px;left:1108.50px;top:424.30px;">Assets</div>
<svg class="a" style="left:1244.6px;top:424.7px;" width="10.6" height="10.6" viewBox="0 0 10.6 10.6"><path d="M5.300 0v10.600M0 5.300h10.600" stroke="#fff" stroke-width="2"/></svg>
<div class="a" style="left:1105px;top:441px;width:159.8px;height:2.2px;background:#fff;"></div>
<div class="a" style="left:908px;top:452.7px;width:356.8px;height:26.1px;background:#323232;border:1px solid #252525;"></div>
<svg class="a" style="left:914.8px;top:458px;" width="15" height="15" viewBox="0 0 15 15"><circle cx="9" cy="6" r="4.800" fill="none" stroke="#e0e0e0" stroke-width="1.200"/><path d="M5.600 9.400L.8 14.200" stroke="#e0e0e0" stroke-width="1.200"/></svg>
<div class="t" style="font-size:11.3px;color:#e8e8e8;letter-spacing:-0.516px;left:937.70px;top:457.80px;">Search</div>
<div class="a" style="left:903.9px;top:483.4px;width:355.9px;height:19.2px;background:#1f1f1f;"></div>
<svg class="a" style="left:908px;top:491.5px;" width="7" height="4" viewBox="0 0 7 4"><path d="M0 0h7L3.500 4z" fill="#d8d8d8"/></svg>
<div class="t" style="font-size:13.8px;color:#f0f0f0;letter-spacing:-0.825px;left:924.00px;top:488.20px;">DEFAULT COMPONENTS</div>
<div class="a" style="left:1260px;top:483.4px;width:9.2px;height:489.6px;background:#3b3b3b;"></div>
<div class="a" style="left:1260px;top:497.2px;width:8.8px;height:281.2px;background:#4d4d4d;"></div>
<svg class="a" style="left:908px;top:519.7px;" width="7" height="4" viewBox="0 0 7 4"><path d="M0 0h7L3.500 4z" fill="#d8d8d8"/></svg>
<div class="t" style="font-size:11.3px;color:#e4e4e4;letter-spacing:-0.560px;left:924.00px;top:518.00px;">BASIC (11)</div>
<svg class="a" style="left:926px;top:544.5px;" width="23" height="23" viewBox="0 0 24 24"><path d="M6.500 3.500V1H23v16.500h-2.500M4 6V3.500H20.500V20H18" fill="none" stroke="#aeaeae" stroke-width="1.300"/><rect x=".8" y="6" width="17.200" height="17.200" fill="#aeaeae"/><circle cx="4.800" cy="11.800" r="1.900" fill="#323232"/><path d="M5 21l5.500-10 5.500 10z" fill="#323232"/></svg>
<div class="t" style="font-size:9.3px;color:#d6d6d6;letter-spacing:-0.510px;left:919.64px;top:568.70px;">Animated</div>
<div class="t" style="font-size:9.3px;color:#d6d6d6;letter-spacing:-0.589px;left:925.76px;top:579.50px;">Image</div>
<svg class="a" style="left:983.3px;top:544.5px;" width="23" height="23" viewBox="0 0 24 24"><rect x="3" y="3" width="18" height="18" fill="none" stroke="#aeaeae" stroke-width="1.500"/><g fill="#aeaeae"><rect x="0" y="0" width="5" height="5"/><rect x="19" y="0" width="5" height="5"/><rect x="0" y="19" width="5" height="5"/><rect x="19" y="19" width="5" height="5"/></g><circle cx="8.500" cy="8.500" r="1.800" fill="#aeaeae"/><path d="M5.500 18.500l6.500-9 6.500 9z" fill="#aeaeae"/></svg>
<div class="t" style="font-size:9.3px;color:#d6d6d6;letter-spacing:-0.586px;left:969.86px;top:575.20px;">Border Image</div>
<svg class="a" style="left:1040.6px;top:544.5px;" width="23" height="23" viewBox="0 0 24 24"><rect x="0" y="1" width="10.500" height="22" fill="#aeaeae"/><rect x="13.500" y="1" width="10.500" height="22" fill="#aeaeae"/><path d="M1.800 12l4.700-4v2.800h3v2.400h-3V16zM22.200 12l-4.700-4v2.800h-3v2.400h3V16z" fill="#323232"/></svg>
<div class="t" style="font-size:9.3px;color:#d6d6d6;letter-spacing:-0.576px;left:1036.06px;top:575.20px;">Flickable</div>
<svg class="a" style="left:1097.9px;top:544.5px;" width="23" height="23" viewBox="0 0 24 24"><rect x="1.500" y="5" width="21" height="14" fill="none" stroke="#aeaeae" stroke-width="1.600" stroke-dasharray="3.200 2.200"/></svg>
<div class="t" style="font-size:9.3px;color:#d6d6d6;letter-spacing:-0.815px;left:1086.34px;top:575.20px;">Focus Scope</div>
<svg class="a" style="left:1155.2px;top:544.5px;" width="23" height="23" viewBox="0 0 24 24"><rect x="1" y="1" width="22" height="22" fill="none" stroke="#aeaeae" stroke-width="1.600"/><circle cx="7" cy="7" r="2.600" fill="#aeaeae"/><path d="M3 20.800l5-8 3 4 5.500-8.500 4.500 12.500z" fill="#aeaeae"/><path d="M2 21.500h20" stroke="#aeaeae" stroke-width="1.600"/></svg>
<div class="t" style="font-size:9.3px;color:#d6d6d6;letter-spacing:-0.589px;left:1154.96px;top:575.20px;">Image</div>
<svg class="a" style="left:1212.5px;top:544.5px;" width="23" height="23" viewBox="0 0 24 24"><g fill="none" stroke="#aeaeae" stroke-width="1.500"><path d="M1 6V1h5M18 1h5v5M23 18v5h-5M6 23H1v-5"/><rect x="7.500" y="7.500" width="9" height="9"/></g></svg>
<div class="t" style="font-size:9.3px;color:#d6d6d6;letter-spacing:-0.573px;left:1215.81px;top:575.20px;">Item</div>
<svg class="a" style="left:926px;top:592.8px;" width="23" height="23" viewBox="0 0 24 24"><path d="M6 1.500v17l4-3.500 3 7 3-1.400-3-6.800h5.500z" fill="#aeaeae"/></svg>
<div class="t" style="font-size:9.3px;color:#d6d6d6;letter-spacing:-0.602px;left:915.40px;top:622.50px;">Mouse Area</div>
<svg class="a" style="left:983.3px;top:592.8px;" width="23" height="23" viewBox="0 0 24 24"><rect x="0.500" y="4" width="23" height="16.500" rx="5" fill="#aeaeae"/></svg>
<div class="t" style="font-size:9.3px;color:#d6d6d6;letter-spacing:-0.675px;left:976.56px;top:622.50px;">Rectangle</div>
<svg class="a" style="left:1040.6px;top:592.8px;" width="23" height="23" viewBox="0 0 24 24"><path d="M1 1h22v7h-2.800V4.800h-5.700v15.400h3.200V23H6.300v-2.800h3.200V4.800H3.800V8H1z" fill="#aeaeae"/></svg>
<div class="t" style="font-size:9.3px;color:#d6d6d6;letter-spacing:-0.391px;left:1044.15px;top:622.50px;">Text</div>
<svg class="a" style="left:1097.9px;top:592.8px;" width="23" height="23" viewBox="0 0 24 24"><path d="M.5 5.500h13.500v5h-2V8.300H9.400v9.200h2.200V20H3v-2.500h2.200V8.300H2.500v2.200h-2z" fill="#aeaeae"/><path d="M14.500 1.200h8.500M14.500 22.800h8.500M18.700 1.200v21.600" stroke="#aeaeae" stroke-width="1.500" fill="none"/></svg>
<div class="t" style="font-size:9.3px;color:#d6d6d6;letter-spacing:-0.573px;left:1093.86px;top:622.50px;">Text Edit</div>
<svg class="a" style="left:1155.2px;top:592.8px;" width="23" height="23" viewBox="0 0 24 24"><rect x="0.500" y="3.500" width="23" height="17" fill="#aeaeae"/><path d="M2.500 7h12v4.500h-2v-2h-2.500v7h2v2.300H5v-2.300h2V9.500H4.500v2h-2z" fill="#323232"/></svg>
<div class="t" style="font-size:9.3px;color:#d6d6d6;letter-spacing:-0.511px;left:1148.84px;top:622.50px;">Text Input</div>
<div class="a" style="left:908px;top:648px;width:347px;height:1.2px;background:#252525;"></div>
<svg class="a" style="left:908px;top:655.7px;" width="7" height="4" viewBox="0 0 7 4"><path d="M0 0h7L3.500 4z" fill="#d8d8d8"/></svg>
<div class="t" style="font-size:11.3px;color:#e4e4e4;letter-spacing:-0.673px;left:924.00px;top:654.00px;">VIEWS (3)</div>
<svg class="a" style="left:926px;top:680.1px;" width="23" height="23" viewBox="0 0 24 24"><rect x="0.8" y="0.8" width="6.200" height="6.200" fill="#aeaeae"/><rect x="9.4" y="0.8" width="6.200" height="6.200" fill="#aeaeae"/><rect x="18.0" y="0.8" width="6.200" height="6.200" fill="#aeaeae"/><rect x="0.8" y="9.4" width="6.200" height="6.200" fill="#aeaeae"/><rect x="9.4" y="9.4" width="6.200" height="6.200" fill="#aeaeae"/><rect x="18.0" y="9.4" width="6.200" height="6.200" fill="#aeaeae"/><rect x="0.8" y="18.0" width="6.200" height="6.200" fill="#aeaeae"/><rect x="9.4" y="18.0" width="6.200" height="6.200" fill="#aeaeae"/><rect x="18.0" y="18.0" width="6.200" height="6.200" fill="#aeaeae"/></svg>
<div class="t" style="font-size:9.3px;color:#d6d6d6;letter-spacing:-0.549px;left:919.63px;top:711.20px;">Grid View</div>
<svg class="a" style="left:983.3px;top:680.1px;" width="23" height="23" viewBox="0 0 24 24"><path d="M.8 2.200h14M4.500 7.200h14M9 22h14.500" stroke="#aeaeae" stroke-width="2.600" fill="none"/><rect x="7.800" y="11.500" width="13.500" height="6.500" fill="none" stroke="#aeaeae" stroke-width="2"/></svg>
<div class="t" style="font-size:9.3px;color:#d6d6d6;letter-spacing:-0.550px;left:978.48px;top:711.20px;">List View</div>
<svg class="a" style="left:1040.6px;top:680.1px;" width="23" height="23" viewBox="0 0 24 24"><path d="M2 1.500c4 3 8 4 12 4.500 4.500.5 7 2 7 6.500s-2.500 6.500-7 7.500c-4.500 1-8 1.500-12 3" fill="none" stroke="#aeaeae" stroke-width="1.500"/><rect x="7" y="9" width="14.500" height="7.500" fill="#323232" stroke="#aeaeae" stroke-width="2"/></svg>
<div class="t" style="font-size:9.3px;color:#d6d6d6;letter-spacing:-0.689px;left:1034.01px;top:711.20px;">Path View</div>
<div class="a" style="left:908px;top:736.2px;width:347px;height:1.2px;background:#252525;"></div>
<svg class="a" style="left:908px;top:743.6px;" width="7" height="4" viewBox="0 0 7 4"><path d="M0 0h7L3.500 4z" fill="#d8d8d8"/></svg>
<div class="t" style="font-size:11.3px;color:#e4e4e4;letter-spacing:-0.723px;left:924.00px;top:741.90px;">POSITIONER (4)</div>
<svg class="a" style="left:926px;top:768.3px;" width="23" height="23" viewBox="0 0 24 24"><rect x="0.8" y=".8" width="6.300" height="22.600" fill="#aeaeae"/><rect x="9.100000000000001" y=".8" width="6.300" height="22.600" fill="#aeaeae"/><rect x="17.400000000000002" y=".8" width="6.300" height="22.600" fill="#aeaeae"/></svg>
<div class="t" style="font-size:9.3px;color:#d6d6d6;letter-spacing:-0.558px;left:922.87px;top:798.90px;">Column</div>
<svg class="a" style="left:983.3px;top:768.3px;" width="23" height="23" viewBox="0 0 24 24"><g fill="#aeaeae"><rect x=".8" y=".8" width="13" height="6.300"/><rect x="15.800" y=".8" width="6" height="6.300"/><rect x=".8" y="9.100" width="22.600" height="6.300"/><rect x=".8" y="17.400" width="16" height="6.300"/></g></svg>
<div class="t" style="font-size:9.3px;color:#d6d6d6;letter-spacing:-0.835px;left:986.23px;top:798.90px;">Flow</div>
<svg class="a" style="left:1040.6px;top:768.3px;" width="23" height="23" viewBox="0 0 24 24"><rect x="1.0" y="1.0" width="5.600" height="5.600" fill="#aeaeae"/><rect x="9.7" y="1.0" width="5.600" height="5.600" fill="#aeaeae"/><rect x="18.4" y="1.0" width="5.600" height="5.600" fill="#aeaeae"/><rect x="1.0" y="9.7" width="5.600" height="5.600" fill="#aeaeae"/><rect x="9.7" y="9.7" width="5.600" height="5.600" fill="#aeaeae"/><rect x="18.4" y="9.7" width="5.600" height="5.600" fill="#aeaeae"/><rect x="1.0" y="18.4" width="5.600" height="5.600" fill="#aeaeae"/><rect x="9.7" y="18.4" width="5.600" height="5.600" fill="#aeaeae"/><rect x="18.4" y="18.4" width="5.600" height="5.600" fill="#aeaeae"/></svg>
<div class="t" style="font-size:9.3px;color:#d6d6d6;letter-spacing:-0.520px;left:1044.09px;top:798.90px;">Grid</div>
<svg class="a" style="left:1097.9px;top:768.3px;" width="23" height="23" viewBox="0 0 24 24"><rect x=".8" y="0.8" width="22.600" height="6.300" fill="#aeaeae"/><rect x=".8" y="9.100000000000001" width="22.600" height="6.300" fill="#aeaeae"/><rect x=".8" y="17.400000000000002" width="22.600" height="6.300" fill="#aeaeae"/></svg>
<div class="t" style="font-size:9.3px;color:#d6d6d6;letter-spacing:-1.136px;left:1101.23px;top:798.90px;">Row</div>
<div class="a" style="left:908px;top:823.7px;width:347px;height:1.2px;background:#252525;"></div>
<svg class="a" style="left:908px;top:831px;" width="7" height="4" viewBox="0 0 7 4"><path d="M0 0h7L3.500 4z" fill="#d8d8d8"/></svg>
<div class="t" style="font-size:11.3px;color:#e4e4e4;letter-spacing:-0.252px;left:924.00px;top:829.30px;">ANIMATION (8)</div>
<svg class="a" style="left:926px;top:856.3px;" width="23" height="23" viewBox="0 0 24 24"><g fill="none" stroke="#aeaeae" stroke-width="1.500"><path d="M1 6V1h5M18 1h5v5M23 18v5h-5M6 23H1v-5"/><rect x="7.500" y="7.500" width="9" height="9"/></g></svg>
<div class="t" style="font-size:9.3px;color:#d6d6d6;letter-spacing:-0.402px;left:915.10px;top:887.10px;">Color...ation</div>
<svg class="a" style="left:983.3px;top:856.3px;" width="23" height="23" viewBox="0 0 24 24"><g fill="none" stroke="#aeaeae" stroke-width="1.500"><path d="M1 6V1h5M18 1h5v5M23 18v5h-5M6 23H1v-5"/><rect x="7.500" y="7.500" width="9" height="9"/></g></svg>
<div class="t" style="font-size:9.3px;color:#d6d6d6;letter-spacing:-0.546px;left:979.63px;top:880.90px;">Number</div>
<div class="t" style="font-size:9.3px;color:#d6d6d6;letter-spacing:-0.427px;left:975.84px;top:891.50px;">Animation</div>
<svg class="a" style="left:1040.6px;top:856.3px;" width="23" height="23" viewBox="0 0 24 24"><g fill="none" stroke="#aeaeae" stroke-width="1.500"><path d="M1 6V1h5M18 1h5v5M23 18v5h-5M6 23H1v-5"/><rect x="7.500" y="7.500" width="9" height="9"/></g></svg>
<div class="t" style="font-size:9.3px;color:#d6d6d6;letter-spacing:-0.627px;left:1038.79px;top:880.90px;">Parallel</div>
<div class="t" style="font-size:9.3px;color:#d6d6d6;letter-spacing:-0.427px;left:1033.14px;top:891.50px;">Animation</div>
<svg class="a" style="left:1097.9px;top:856.3px;" width="23" height="23" viewBox="0 0 24 24"><g fill="none" stroke="#aeaeae" stroke-width="1.500"><path d="M1 6V1h5M18 1h5v5M23 18v5h-5M6 23H1v-5"/><rect x="7.500" y="7.500" width="9" height="9"/></g></svg>
<div class="t" style="font-size:9.3px;color:#d6d6d6;letter-spacing:-1.035px;left:1098.28px;top:880.90px;">Pause</div>
<div class="t" style="font-size:9.3px;color:#d6d6d6;letter-spacing:-0.427px;left:1090.44px;top:891.50px;">Animation</div>
<svg class="a" style="left:1155.2px;top:856.3px;" width="23" height="23" viewBox="0 0 24 24"><g fill="none" stroke="#aeaeae" stroke-width="1.500"><path d="M1 6V1h5M18 1h5v5M23 18v5h-5M6 23H1v-5"/><rect x="7.500" y="7.500" width="9" height="9"/></g></svg>
<div class="t" style="font-size:9.3px;color:#d6d6d6;letter-spacing:-0.555px;left:1151.07px;top:880.90px;">Property</div>
<div class="t" style="font-size:9.3px;color:#d6d6d6;letter-spacing:-0.391px;left:1154.75px;top:891.50px;">Action</div>
<svg class="a" style="left:1212.5px;top:856.3px;" width="23" height="23" viewBox="0 0 24 24"><g fill="none" stroke="#aeaeae" stroke-width="1.500"><path d="M1 6V1h5M18 1h5v5M23 18v5h-5M6 23H1v-5"/><rect x="7.500" y="7.500" width="9" height="9"/></g></svg>
<div class="t" style="font-size:9.3px;color:#d6d6d6;letter-spacing:-0.555px;left:1208.37px;top:880.90px;">Property</div>
<div class="t" style="font-size:9.3px;color:#d6d6d6;letter-spacing:-0.427px;left:1205.04px;top:891.50px;">Animation</div>
<svg class="a" style="left:926px;top:904.5px;" width="23" height="23" viewBox="0 0 24 24"><g fill="none" stroke="#aeaeae" stroke-width="1.500"><path d="M1 6V1h5M18 1h5v5M23 18v5h-5M6 23H1v-5"/><rect x="7.500" y="7.500" width="9" height="9"/></g></svg>
<div class="t" style="font-size:9.3px;color:#d6d6d6;letter-spacing:-0.338px;left:913.68px;top:934.50px;">Script Action</div>
<svg class="a" style="left:983.3px;top:904.5px;" width="23" height="23" viewBox="0 0 24 24"><g fill="none" stroke="#aeaeae" stroke-width="1.500"><path d="M1 6V1h5M18 1h5v5M23 18v5h-5M6 23H1v-5"/><rect x="7.500" y="7.500" width="9" height="9"/></g></svg>
<div class="t" style="font-size:9.3px;color:#d6d6d6;letter-spacing:-0.615px;left:975.59px;top:929.00px;">Sequential</div>
<div class="t" style="font-size:9.3px;color:#d6d6d6;letter-spacing:-0.427px;left:975.84px;top:939.60px;">Animation</div>
<div class="a" style="left:903.9px;top:960px;width:355.9px;height:13px;background:#1f1f1f;"></div>
<div class="a" style="left:903.9px;top:960px;width:340px;height:13px;overflow:hidden;">
<div class="t" style="font-size:13.8px;color:#f0f0f0;letter-spacing:-0.897px;left:20.10px;top:3.30px;">QTQUICK CONTROLS</div>
<svg class="a" style="left:4.1px;top:8.5px;" width="7" height="4" viewBox="0 0 7 4"><path d="M0 0h7L3.500 4z" fill="#d8d8d8"/></svg>
</div>
<div class="a" style="left:2272px;top:413.9px;width:341.6px;height:956.1px;background:#323232;"></div>
<div class="a" style="left:2272px;top:413.9px;width:341.6px;height:18.1px;background:#1f1f1f;"></div>
<svg class="a" style="left:2276.2px;top:421.1px;" width="7" height="4" viewBox="0 0 7 4"><path d="M0 0h7L3.500 4z" fill="#d8d8d8"/></svg>
<div class="t" style="font-size:10.6px;color:#f0f0f0;letter-spacing:-0.218px;left:2292.30px;top:419.10px;">COMPONENT</div>
<div class="t" style="font-size:10.6px;color:#e4e4e4;left:2330.03px;top:451.20px;">Type</div>
<div class="a" style="left:2391px;top:441.9px;width:200.2px;height:26.5px;background:#323232;border:1px solid #252525;"></div>
<div class="t" style="font-size:10.6px;color:#e4e4e4;letter-spacing:0.223px;left:2396.60px;top:449.40px;">Item</div>
<div class="t" style="font-size:10.6px;color:#e4e4e4;left:2342.41px;top:482.60px;">ID</div>
<div class="a" style="left:2391px;top:473.3px;width:200.2px;height:26.7px;background:#323232;border:1px solid #252525;"></div>
<div class="t" style="font-size:10.6px;color:#e4e4e4;left:2324.73px;top:513.80px;">Name</div>
<div class="a" style="left:2391px;top:504.5px;width:200.2px;height:26.7px;background:#323232;border:1px solid #252525;"></div>
<div class="t" style="font-size:10.4px;color:#f2f2f2;letter-spacing:0.336px;left:2453.37px;top:513.70px;">Add Annotation</div>
<div class="a" style="left:2272px;top:540.9px;width:341.6px;height:19.1px;background:#1f1f1f;"></div>
<svg class="a" style="left:2276.2px;top:548.6px;" width="7" height="4" viewBox="0 0 7 4"><path d="M0 0h7L3.500 4z" fill="#d8d8d8"/></svg>
<div class="t" style="font-size:10.6px;color:#f0f0f0;letter-spacing:-0.285px;left:2292.30px;top:546.60px;">GEOMETRY - 2D</div>
<div class="t" style="font-size:10.6px;color:#e4e4e4;left:2315.30px;top:578.90px;">Position</div>
<div class="a" style="left:2391px;top:569.3px;width:79.2px;height:26.8px;background:#323232;border:1px solid #252525;"></div>
<div class="t" style="font-size:10.6px;color:#e4e4e4;left:2457.59px;top:578.40px;">0</div>
<div class="t" style="font-size:10.6px;color:#e4e4e4;left:2477.70px;top:578.90px;">X</div>
<div class="a" style="left:2512px;top:569.3px;width:79.2px;height:26.8px;background:#323232;border:1px solid #252525;"></div>
<div class="t" style="font-size:10.6px;color:#e4e4e4;left:2578.59px;top:578.40px;">0</div>
<div class="t" style="font-size:10.6px;color:#e4e4e4;left:2598.80px;top:578.90px;">Y</div>
<div class="t" style="font-size:10.6px;color:#e4e4e4;left:2332.39px;top:610.00px;">Size</div>
<div class="a" style="left:2391px;top:601.2px;width:79.2px;height:26.5px;background:#323232;border:1px solid #252525;"></div>
<div class="t" style="font-size:10.6px;color:#e4e4e4;left:2445.81px;top:609.50px;">640</div>
<div class="t" style="font-size:10.6px;color:#e4e4e4;left:2476.30px;top:610.00px;">W</div>
<div class="a" style="left:2512px;top:601.2px;width:79.2px;height:26.5px;background:#323232;border:1px solid #252525;"></div>
<div class="t" style="font-size:10.6px;color:#e4e4e4;left:2566.81px;top:609.50px;">480</div>
<div class="t" style="font-size:10.6px;color:#e4e4e4;left:2598.80px;top:610.00px;">H</div>
<div class="t" style="font-size:10.6px;color:#e4e4e4;left:2313.53px;top:641.90px;">Rotation</div>
<div class="a" style="left:2391px;top:632.6px;width:79.2px;height:26.5px;background:#323232;border:1px solid #252525;"></div>
<div class="t" style="font-size:10.6px;color:#e4e4e4;left:2442.88px;top:641.40px;">0.00</div>
<div class="t" style="font-size:10.6px;color:#e4e4e4;left:2477.70px;top:641.90px;">°</div>
<div class="t" style="font-size:10.6px;color:#e4e4e4;left:2326.50px;top:673.10px;">Scale</div>
<div class="a" style="left:2391px;top:664.2px;width:200.2px;height:26.3px;background:#323232;border:1px solid #252525;"></div>
<div class="t" style="font-size:10.6px;color:#e4e4e4;left:2537.97px;top:672.60px;">1.00</div>
<svg class="a" style="left:2571.7px;top:674px;" width="11.5" height="6.5" viewBox="0 0 11.5 6.5"><path d="M.5 .5l5.250 5.200L11 .5" fill="none" stroke="#cfcfcf" stroke-width="1"/></svg>
<div class="t" style="font-size:10.6px;color:#e4e4e4;left:2598.00px;top:673.10px;">%</div>
<div class="t" style="font-size:10.6px;color:#e4e4e4;left:2318.86px;top:704.20px;">Z stack</div>
<div class="a" style="left:2391px;top:695.4px;width:79.2px;height:26.7px;background:#323232;border:1px solid #252525;"></div>
<div class="t" style="font-size:10.6px;color:#e4e4e4;left:2457.59px;top:703.70px;">0</div>
<div class="t" style="font-size:10.6px;color:#e4e4e4;left:2324.73px;top:735.90px;">Origin</div>
<div class="a" style="left:2391px;top:726.5px;width:27.1px;height:26.8px;background:#323232;border:1px solid #252525;"></div>
<div class="a" style="left:2400px;top:735.6px;width:9.4px;height:8.6px;background:#2dafd7;"></div>
<div class="a" style="left:2272px;top:763px;width:341.6px;height:19px;background:#1f1f1f;"></div>
<svg class="a" style="left:2276.2px;top:770.4px;" width="7" height="4" viewBox="0 0 7 4"><path d="M0 0h7L3.500 4z" fill="#d8d8d8"/></svg>
<div class="t" style="font-size:10.6px;color:#f0f0f0;letter-spacing:-0.451px;left:2292.30px;top:768.40px;">VISIBILITY</div>
<div class="t" style="font-size:10.6px;color:#e4e4e4;left:2314.92px;top:801.00px;">Visibility</div>
<div class="a" style="left:2391px;top:791.4px;width:27.1px;height:26.7px;background:#323232;border:1px solid #252525;"></div>
<svg class="a" style="left:2399.3px;top:800.3px;" width="11" height="9" viewBox="0 0 11 9"><path d="M.8 4.800l3.400 3L10.200 .8" fill="none" stroke="#fff" stroke-width="1.500"/></svg>
<div class="t" style="font-size:10.6px;color:#e4e4e4;letter-spacing:0.155px;left:2423.40px;top:800.60px;">Visible</div>
<div class="a" style="left:2512px;top:791.4px;width:27.2px;height:26.7px;background:#323232;border:1px solid #252525;"></div>
<div class="t" style="font-size:10.6px;color:#e4e4e4;letter-spacing:0.213px;left:2544.40px;top:800.60px;">Clip</div>
<div class="t" style="font-size:10.6px;color:#e4e4e4;left:2317.08px;top:832.60px;">Opacity</div>
<div class="a" style="left:2391px;top:823.5px;width:200.2px;height:26.7px;background:#323232;border:1px solid #252525;"></div>
<div class="t" style="font-size:10.6px;color:#e4e4e4;left:2537.97px;top:832.10px;">1.00</div>
<svg class="a" style="left:2571.7px;top:833.2px;" width="11.5" height="6.5" viewBox="0 0 11.5 6.5"><path d="M.5 .5l5.250 5.200L11 .5" fill="none" stroke="#cfcfcf" stroke-width="1"/></svg>
<div class="t" style="font-size:10.6px;color:#e4e4e4;left:2328.25px;top:864.20px;">State</div>
<div class="a" style="left:2391px;top:854.7px;width:200.2px;height:26.7px;background:#323232;border:1px solid #252525;"></div>
<div class="t" style="font-size:10.6px;color:#e4e4e4;letter-spacing:0.061px;left:2396.60px;top:863.40px;">base state</div>
<svg class="a" style="left:2571.7px;top:864.6px;" width="11.5" height="6.5" viewBox="0 0 11.5 6.5"><path d="M.5 .5l5.250 5.200L11 .5" fill="none" stroke="#cfcfcf" stroke-width="1"/></svg>
<div class="a" style="left:2272px;top:894.3px;width:171.6px;height:21.3px;background:#2dafd7;"></div>
<div class="a" style="left:2444px;top:894.3px;width:170px;height:21.3px;background:#323232;border:1px solid #2dafd7;"></div>
<div class="t" style="font-size:11px;color:#1d7f9f;left:2346.30px;top:901.00px;">Item</div>
<div class="t" style="font-size:11px;color:#2dafd7;left:2511.88px;top:901.00px;">Layout</div>
<div class="a" style="left:2272px;top:915.6px;width:341.6px;height:39px;background:#1f1f1f;"></div>
<svg class="a" style="left:2277.4px;top:923px;" width="4.5" height="7.5" viewBox="0 0 4.5 7.5"><path d="M0 0v7.500L4.500 3.750z" fill="#d8d8d8"/></svg>
<div class="t" style="font-size:10.6px;color:#f0f0f0;letter-spacing:-0.199px;left:2292.30px;top:922.00px;">ADVANCED</div>
<svg class="a" style="left:2277.4px;top:942.5px;" width="4.5" height="7.5" viewBox="0 0 4.5 7.5"><path d="M0 0v7.500L4.500 3.750z" fill="#d8d8d8"/></svg>
<div class="t" style="font-size:10.6px;color:#f0f0f0;letter-spacing:-0.794px;left:2292.30px;top:941.50px;">LAYER</div>
<div class="a" style="left:1271px;top:1218px;width:991px;height:152.3px;background:#323232;"></div>
<div class="a" style="left:1272px;top:1219px;width:243.7px;height:151.1px;background:#2dafd7;"></div>
<div class="a" style="left:1285px;top:1232px;width:218px;height:137.8px;background:#383838;border:1.800px solid #ffe600;border-bottom:none;"></div>
<div class="a" style="left:1310px;top:1238px;width:128.7px;height:27px;background:#323232;border:1px solid #252525;"></div>
<div class="t" style="font-size:10.6px;color:#e4e4e4;letter-spacing:-0.029px;left:1315.60px;top:1246.70px;">base state</div>
<div class="t" style="font-size:10.8px;color:#f0f0f0;font-style:italic;letter-spacing:0.126px;left:1451.20px;top:1246.70px;">Default</div>
<div class="a" style="left:1286px;top:1268px;width:214.5px;height:1.6px;background:#6a6a6a;"></div>
<div class="a" style="left:1300px;top:1293px;width:186.9px;height:77.2px;background:#fff;"></div>
<div class="a" style="left:2136px;top:1307px;width:117.6px;height:63.3px;border:1px solid #252525;border-bottom:none;"></div>
<div class="t" style="font-size:10.8px;color:#f0f0f0;font-style:italic;letter-spacing:0.124px;left:2151.80px;top:1337.70px;">Create New State</div>
<div class="a" style="left:2654px;top:342.2px;width:254px;height:751px;border:2px solid #000;"></div>
<div class="a" style="left:2654px;top:303px;width:27.5px;height:40.5px;background:#cbcbcb;border:1.400px solid #555;border-radius:0 5px 0 0;border-left:none;border-bottom:none;"></div>
<svg class="a" style="left:2653.8px;top:304px;" width="9" height="40" viewBox="0 0 9 40"><path d="M0 0V3.800L7.200 11.900.700 19.400 6.700 28.600.200 37.200V40H-1V0z" fill="#e1e1e1" stroke="#8c8c8c" stroke-width=".8"/></svg>
<div class="a" style="left:2681px;top:302.3px;width:164px;height:42.5px;background:#e1e1e1;border:2px solid #5c5c5c;border-radius:6px 6px 0 0;border-bottom:none;"></div>
<div class="t" style="font-size:22px;color:#000;-webkit-text-stroke:.22px;letter-spacing:-0.035px;left:2688.00px;top:314.10px;">Outputs</div>
<div class="a" style="left:2846px;top:302.3px;width:28.6px;height:39px;background:#e1e1e1;border:2px solid #000;border-radius:3px;border-bottom-width:2.600px;"></div>
<svg class="a" style="left:2855.5px;top:311.5px;" width="11.5" height="19" viewBox="0 0 11.5 19"><path d="M11.500 0v19L0 9.500z" fill="#000"/></svg>
<div class="a" style="left:2876px;top:302.8px;width:30.5px;height:38.5px;background:#cbcbcb;border-radius:3px;"></div>
<svg class="a" style="left:2885.5px;top:311.5px;" width="11.5" height="19" viewBox="0 0 11.5 19"><path d="M0 0v19L11.500 9.500z" fill="#8a8a8a"/></svg>
<div class="a" style="left:2668px;top:356.1px;width:226.2px;height:171.7px;background:#666;border:8.200px solid #f00;border-radius:4.5px;"></div>
<div class="a" style="left:2676px;top:364.3px;width:209.9px;height:99.6px;background:#000;"></div>
<div class="a" style="left:2702px;top:369.8px;width:34.9px;height:53.7px;background:#323232;"></div>
<div class="a" style="left:2833px;top:369.8px;width:32.7px;height:92.2px;background:#323232;"></div>
<div class="a" style="left:2738px;top:447.1px;width:94.5px;height:14.9px;background:#323232;"></div>
<div class="a" style="left:2738px;top:447.1px;width:23px;height:14.9px;background:#2dafd7;"></div>
<div class="a" style="left:2739px;top:448.4px;width:20.4px;height:13.6px;background:#383838;border:1px solid #ffe600;border-bottom:none;"></div>
<div class="a" style="left:2740px;top:454.2px;width:18.2px;height:7.8px;background:#fff;"></div>
<div class="a" style="left:2833px;top:416.3px;width:17px;height:2.2px;background:#2dafd7;"></div>
<div class="a" style="left:2856px;top:416.8px;width:3px;height:1.2px;background:#2dafd7;"></div>
<div class="a" style="left:2833px;top:369.8px;width:32.7px;height:2px;background:#1f1f1f;"></div>
<div class="a" style="left:2833px;top:381.3px;width:32.7px;height:2.5px;background:#1f1f1f;"></div>
<div class="a" style="left:2833px;top:402.6px;width:32.7px;height:2.2px;background:#1f1f1f;"></div>
<div class="a" style="left:2833px;top:418.5px;width:32.7px;height:3.1px;background:#1f1f1f;"></div>
<div class="a" style="left:2702px;top:376.4px;width:33.5px;height:2.2px;background:#1f1f1f;"></div>
<div class="a" style="left:2702px;top:421.5px;width:33.5px;height:2px;background:#1f1f1f;"></div>
<div class="t" style="font-size:22px;color:#000;-webkit-text-stroke:.22px;letter-spacing:-1.457px;left:2679.00px;top:483.10px;">RT0</div>
<div class="t" style="font-size:22px;color:#000;-webkit-text-stroke:.22px;letter-spacing:-0.560px;left:2751.30px;top:469.10px;">Swapchain</div>
<div class="t" style="font-size:22px;color:#000;-webkit-text-stroke:.22px;letter-spacing:0.128px;left:2751.30px;top:496.10px;">Image 115</div>
<svg class="a" style="left:2702px;top:369.8px;" width="34.9" height="53.7" viewBox="0 0 34.9 53.7"><rect x="8.9" y="28.6" width="2.5" height="1" fill="#9a9a9a"/><rect x="15.7" y="30.3" width="1.5" height="1" fill="#666"/><rect x="28.4" y="25.1" width="1.5" height="1" fill="#666"/><rect x="7.6" y="36.7" width="2.5" height="1" fill="#666"/><rect x="15.8" y="33.0" width="1.5" height="1" fill="#777"/><rect x="20.4" y="43.8" width="2.0" height="1" fill="#666"/><rect x="23.5" y="34.6" width="1.5" height="1" fill="#8a8a8a"/><rect x="24.0" y="30.8" width="1.5" height="1" fill="#9a9a9a"/><rect x="25.9" y="15.7" width="2.5" height="1" fill="#666"/><rect x="28.7" y="21.2" width="2.0" height="1" fill="#c89a3a"/><rect x="23.1" y="30.1" width="2.0" height="1" fill="#777"/><rect x="4.8" y="9.4" width="2.0" height="1" fill="#777"/><rect x="30.0" y="23.5" width="2.0" height="1" fill="#9a9a9a"/><rect x="16.7" y="21.1" width="2.5" height="1" fill="#9a9a9a"/><rect x="19.0" y="30.5" width="2.5" height="1" fill="#9a9a9a"/><rect x="28.6" y="4.3" width="2.5" height="1" fill="#9a9a9a"/><rect x="21.5" y="10.7" width="2.5" height="1" fill="#9a9a9a"/><rect x="28.2" y="29.7" width="2.5" height="1" fill="#777"/><rect x="26.1" y="30.0" width="1.5" height="1" fill="#9a9a9a"/><rect x="3.8" y="43.1" width="1.5" height="1" fill="#c89a3a"/><rect x="12.0" y="6.1" width="1.5" height="1" fill="#777"/><rect x="10.5" y="39.1" width="1.5" height="1" fill="#8a8a8a"/><rect x="19.5" y="38.8" width="2.5" height="1" fill="#c89a3a"/><rect x="19.0" y="28.9" width="2.5" height="1" fill="#9a9a9a"/><rect x="8.8" y="4.7" width="1.5" height="1" fill="#8a8a8a"/><rect x="5.1" y="28.2" width="2.0" height="1" fill="#777"/><rect x="10.5" y="15.4" width="2.0" height="1" fill="#8a8a8a"/><rect x="11.1" y="48.1" width="2.0" height="1" fill="#c89a3a"/><rect x="15.4" y="27.4" width="2.5" height="1" fill="#666"/><rect x="18.2" y="32.1" width="2.0" height="1" fill="#666"/><rect x="14.5" y="36.9" width="2.0" height="1" fill="#777"/><rect x="14.7" y="15.1" width="2.5" height="1" fill="#9a9a9a"/><rect x="11.8" y="40.1" width="2.0" height="1" fill="#666"/><rect x="2.6" y="31.9" width="1.5" height="1" fill="#777"/><rect x="20.4" y="18.6" width="2.5" height="1" fill="#9a9a9a"/><rect x="28.6" y="31.6" width="2.5" height="1" fill="#9a9a9a"/><rect x="16.2" y="30.7" width="2.0" height="1" fill="#8a8a8a"/><rect x="9.3" y="24.4" width="2.5" height="1" fill="#666"/><rect x="11.3" y="20.1" width="2.0" height="1" fill="#9a9a9a"/><rect x="26.5" y="15.4" width="1.5" height="1" fill="#c89a3a"/><rect x="24.4" y="4.3" width="2.5" height="1" fill="#666"/><rect x="23.3" y="17.6" width="2.5" height="1" fill="#777"/><rect x="25.3" y="14.2" width="2.5" height="1" fill="#777"/><rect x="14.6" y="35.8" width="2.5" height="1" fill="#8a8a8a"/><rect x="11.3" y="18.7" width="2.0" height="1" fill="#777"/><rect x="25.5" y="48.2" width="2.0" height="1" fill="#8a8a8a"/><rect x="23.5" y="13.2" width="2.0" height="1" fill="#666"/><rect x="9.8" y="40.0" width="2.5" height="1" fill="#8a8a8a"/><rect x="29.8" y="17.8" width="1.5" height="1" fill="#666"/><rect x="27.0" y="19.0" width="2.5" height="1" fill="#8a8a8a"/><rect x="12.0" y="9.1" width="2.5" height="1" fill="#9a9a9a"/><rect x="25.0" y="15.7" width="2.5" height="1" fill="#9a9a9a"/><rect x="14.1" y="22.7" width="1.5" height="1" fill="#c89a3a"/><rect x="28.7" y="10.3" width="2.0" height="1" fill="#8a8a8a"/><rect x="29.4" y="44.4" width="2.0" height="1" fill="#666"/><rect x="18.2" y="49.3" width="1.5" height="1" fill="#777"/><rect x="23.6" y="42.3" width="2.0" height="1" fill="#666"/><rect x="17.8" y="44.8" width="2.5" height="1" fill="#8a8a8a"/><rect x="30.2" y="8.6" width="1.5" height="1" fill="#777"/><rect x="3.0" y="40.7" width="1.5" height="1" fill="#666"/></svg>
<svg class="a" style="left:2833.3px;top:369.8px;" width="32.7" height="92.2" viewBox="0 0 32.7 92.2"><rect x="27.2" y="45.3" width="1.5" height="1" fill="#666"/><rect x="3.4" y="38.0" width="3.0" height="1" fill="#777"/><rect x="11.1" y="34.2" width="3.0" height="1" fill="#666"/><rect x="14.2" y="47.1" width="1.5" height="1" fill="#666"/><rect x="12.2" y="14.9" width="2.0" height="1" fill="#666"/><rect x="24.9" y="5.9" width="1.5" height="1" fill="#777"/><rect x="6.3" y="44.7" width="1.5" height="1" fill="#8a8a8a"/><rect x="9.5" y="15.9" width="1.5" height="1" fill="#777"/><rect x="16.2" y="29.8" width="1.5" height="1" fill="#c89a3a"/><rect x="23.4" y="14.7" width="3.0" height="1" fill="#666"/><rect x="17.0" y="5.4" width="1.5" height="1" fill="#2b8fb3"/><rect x="26.1" y="39.4" width="1.5" height="1" fill="#8a8a8a"/><rect x="4.3" y="25.7" width="3.0" height="1" fill="#8a8a8a"/><rect x="5.3" y="26.6" width="1.5" height="1" fill="#2b8fb3"/><rect x="11.5" y="19.5" width="3.0" height="1" fill="#c89a3a"/><rect x="11.2" y="15.5" width="2.0" height="1" fill="#2b8fb3"/><rect x="6.3" y="29.1" width="1.5" height="1" fill="#c89a3a"/><rect x="18.3" y="5.0" width="3.0" height="1" fill="#c89a3a"/><rect x="20.6" y="28.4" width="3.0" height="1" fill="#8a8a8a"/><rect x="26.9" y="5.5" width="3.0" height="1" fill="#c89a3a"/><rect x="11.5" y="47.7" width="2.0" height="1" fill="#c89a3a"/><rect x="3.5" y="13.3" width="3.0" height="1" fill="#2b8fb3"/><rect x="18.9" y="40.7" width="2.0" height="1" fill="#777"/><rect x="6.5" y="4.3" width="2.0" height="1" fill="#2b8fb3"/><rect x="29.2" y="29.3" width="1.5" height="1" fill="#2b8fb3"/><rect x="15.5" y="8.8" width="2.0" height="1" fill="#666"/><rect x="21.0" y="37.5" width="3.0" height="1" fill="#666"/><rect x="5.8" y="30.6" width="2.0" height="1" fill="#8a8a8a"/><rect x="6.9" y="39.4" width="3.0" height="1" fill="#8a8a8a"/><rect x="5.5" y="7.7" width="1.5" height="1" fill="#c89a3a"/><rect x="25.1" y="19.0" width="1.5" height="1" fill="#8a8a8a"/><rect x="25.8" y="34.7" width="3.0" height="1" fill="#2b8fb3"/><rect x="11.1" y="7.2" width="3.0" height="1" fill="#666"/><rect x="17.3" y="14.2" width="3.0" height="1" fill="#666"/><rect x="5.7" y="29.0" width="2.0" height="1" fill="#666"/><rect x="26.5" y="11.5" width="1.5" height="1" fill="#8a8a8a"/><rect x="30.0" y="33.4" width="3.0" height="1" fill="#c89a3a"/><rect x="21.9" y="47.3" width="2.0" height="1" fill="#2b8fb3"/><rect x="19.2" y="47.1" width="2.0" height="1" fill="#666"/><rect x="29.1" y="20.6" width="2.0" height="1" fill="#777"/><rect x="25.8" y="48.5" width="3.0" height="1" fill="#c89a3a"/><rect x="18.3" y="30.3" width="3.0" height="1" fill="#666"/><rect x="16.1" y="33.2" width="1.5" height="1" fill="#777"/><rect x="5.6" y="38.2" width="2.0" height="1" fill="#666"/><rect x="18.8" y="43.3" width="2.0" height="1" fill="#777"/><rect x="23.3" y="9.9" width="2.0" height="1" fill="#666"/><rect x="28.2" y="43.0" width="2.0" height="1" fill="#666"/><rect x="21.1" y="43.2" width="3.0" height="1" fill="#666"/><rect x="18.8" y="15.6" width="2.0" height="1" fill="#777"/><rect x="3.6" y="25.5" width="1.5" height="1" fill="#c89a3a"/><rect x="7.7" y="19.9" width="2.0" height="1" fill="#2b8fb3"/><rect x="23.9" y="9.7" width="3.0" height="1" fill="#c89a3a"/><rect x="19.2" y="25.0" width="1.5" height="1" fill="#666"/><rect x="16.0" y="36.9" width="3.0" height="1" fill="#c89a3a"/><rect x="26.8" y="5.2" width="1.5" height="1" fill="#777"/></svg>
<div class="a" style="left:2654px;top:1104px;width:254px;height:409.6px;border:2px solid #000;"></div>
<div class="a" style="left:2656px;top:1106px;width:251px;height:29.5px;background:#bababa;"></div>
<div class="t" style="font-size:22px;color:#000;-webkit-text-stroke:.22px;letter-spacing:-0.333px;left:2664.20px;top:1110.10px;">Pixel Context</div>
<div class="a" style="left:2656px;top:1136px;width:250.3px;height:328.6px;background:repeating-conic-gradient(#e1e1e1 0 25%,#989898 0 50%) 0px 0px/128px 128px;"></div>
<div class="a" style="left:2656px;top:1135px;width:250.3px;height:1.3px;background:#000;"></div>
<div class="a" style="left:2657px;top:1464px;width:121.8px;height:46px;background:#e1e1e1;border:2px solid #000;border-radius:3.5px;border-bottom-width:3.200px;"></div>
<svg class="a" style="left:2665.5px;top:1471.5px;" width="30" height="30" viewBox="0 0 29 29"><circle cx="16.500" cy="16.500" r="11.200" fill="#fdfdfd" stroke="#9d9d9d" stroke-width="2.200"/><path d="M16.500 9.500v7.500h5" fill="none" stroke="#444" stroke-width="1.800" stroke-linecap="round"/><path d="M16.500 7.200v1.600M16.500 24.200v1.600M7.200 16.500h1.600M24.200 16.500h1.600" stroke="#999" stroke-width="1.200"/><path d="M15 1.200C7.500 1.800 2.800 7.800 3.200 15l-3 -.3 4.800 6.300 4.600-6.800-3 .2C6.500 9.600 10 5.200 15.200 4.600z" fill="#9fd12c" stroke="#6f9e14" stroke-width="1" stroke-linejoin="round"/></svg>
<div class="t" style="font-size:22px;color:#000;-webkit-text-stroke:.22px;letter-spacing:-0.308px;left:2700.70px;top:1478.10px;">History</div>
<div class="a" style="left:2784px;top:1464px;width:118.6px;height:46px;background:#e1e1e1;border:2px solid #000;border-radius:3.5px;border-bottom-width:3.200px;"></div>
<svg class="a" style="left:2793.6px;top:1471.3px;" width="29" height="30.5" viewBox="0 0 29 30"><path d="M26.500 3.800a6.200 6.200 0 0 0-8.800 7.600l-3.400 3.400 3 3 3.400-3.400a6.200 6.200 0 0 0 7.600-2.300l-3.900.2-2.100-2.800 1.200-3.300z" fill="#c9c9c9" stroke="#8c8c8c" stroke-width="1.100" stroke-linejoin="round"/><path d="M14.200 14.600L2.300 24.800a2.600 2.600 0 0 0 3.600 3.800L17.500 17.800z" fill="#3f9be8" stroke="#2a74c6" stroke-width="1.100" stroke-linejoin="round"/><path d="M4 25.500L14.500 16" stroke="#a9d6fb" stroke-width="1.300" stroke-linecap="round"/></svg>
<div class="t" style="font-size:22px;color:#000;-webkit-text-stroke:.22px;letter-spacing:-0.689px;left:2828.60px;top:1478.10px;">Debug</div>
</body></html>
